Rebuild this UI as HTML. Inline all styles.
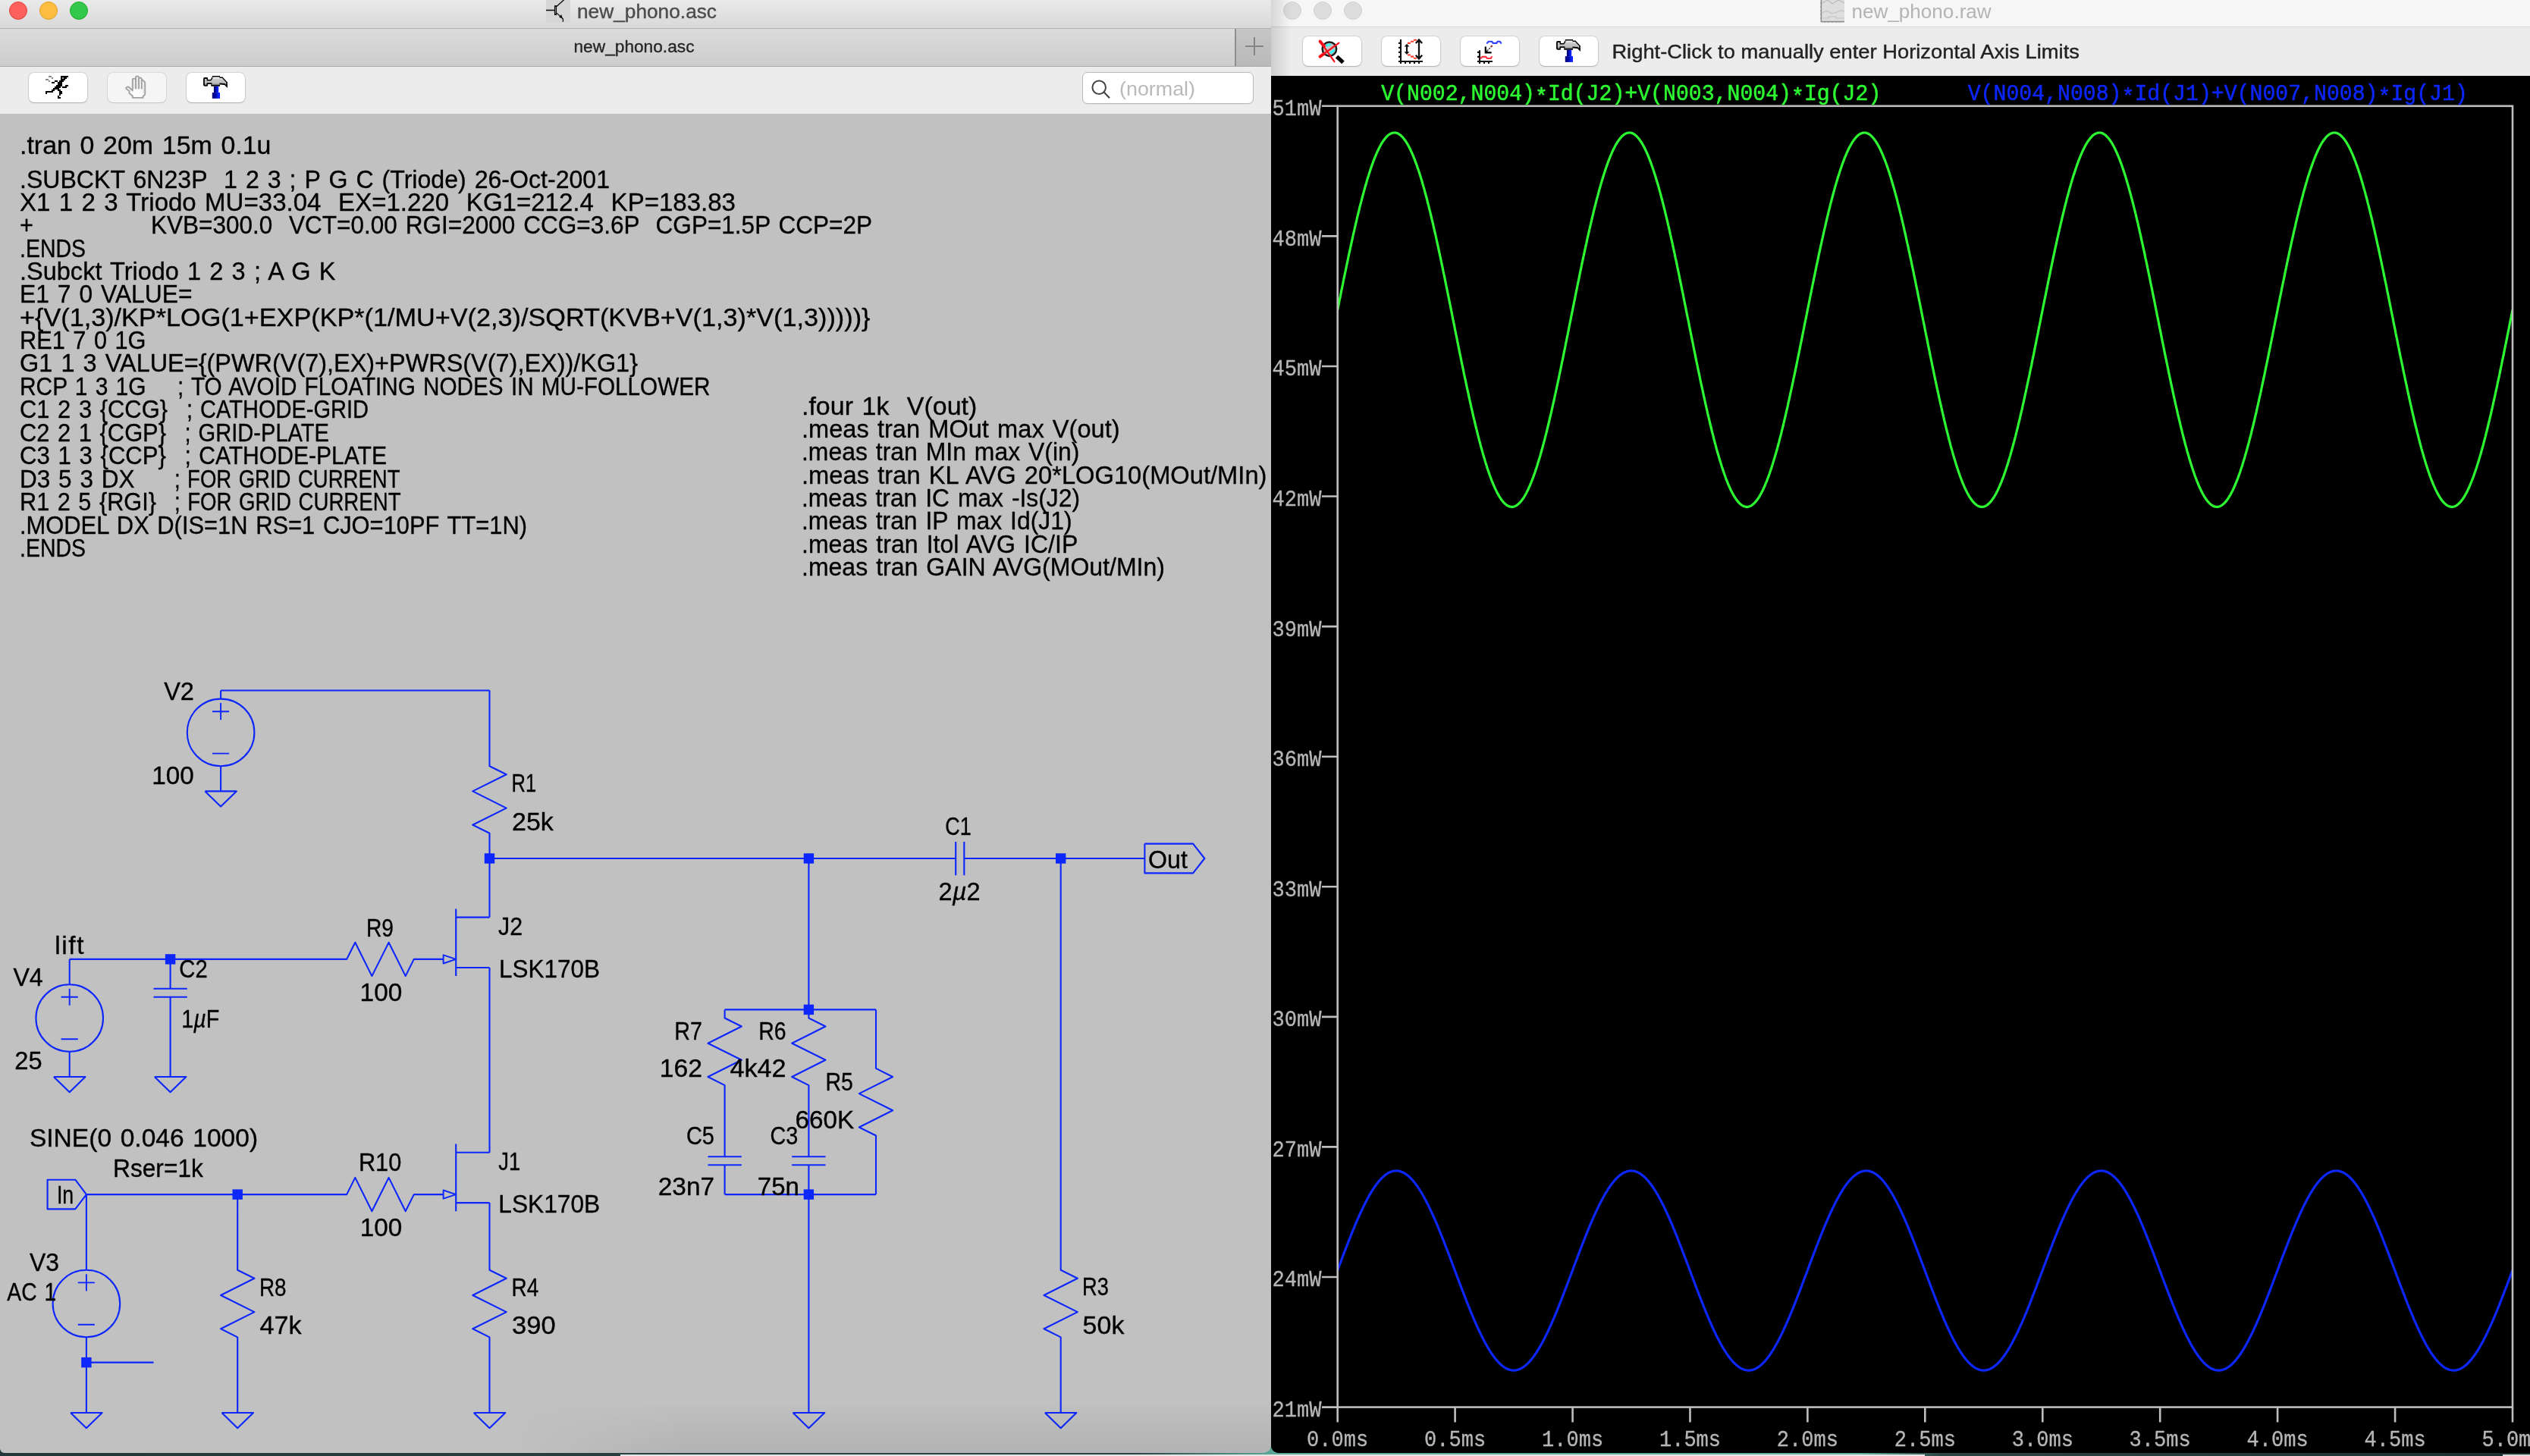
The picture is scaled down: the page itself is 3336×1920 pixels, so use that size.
<!DOCTYPE html>
<html><head><meta charset="utf-8"><title>LTspice</title>
<style>
html,body{margin:0;padding:0}
body{width:3336px;height:1920px;position:relative;overflow:hidden;background:linear-gradient(to right,#22383a 0,#2a4446 1500px,#5ca898 1680px,#62b0a0 2450px,#2a4442 2560px,#1c2e2e 3336px);font-family:"Liberation Sans", sans-serif}
.abs{position:absolute}
svg{will-change:transform}
#deskb{position:absolute;left:818px;width:1720px;top:1918px;height:2px;background:#e6e6e6}
#deskc{position:absolute;left:3300px;right:0;top:1918px;height:2px;background:#d8d8d8}
#lw{position:absolute;left:0;top:0;width:1676px;height:1916px;border-radius:0 0 10px 6px;overflow:hidden;background:#c1c1c1}
#rw{position:absolute;left:1676px;top:0;width:1660px;height:1916px;border-radius:0 0 0 10px;overflow:hidden;background:#000}
#ltitle{position:absolute;left:0;top:0;width:100%;height:37px;background:linear-gradient(#eaeaea,#d8d8d8);border-bottom:1px solid #b4b4b4}
#ltab{position:absolute;left:0;top:38px;width:100%;height:49px;background:linear-gradient(#dcdcdc,#cdcdcd);border-bottom:1px solid #a8a8a8}
#lplus{position:absolute;left:1628px;top:0;width:48px;height:49px;background:linear-gradient(#c6c6c6,#b9b9b9);border-left:2px solid #8f8f8f;box-sizing:border-box}
#ltool{position:absolute;left:0;top:88px;width:100%;height:62px;background:#ececec}
.tl{position:absolute;top:2px;width:24px;height:24px;border-radius:50%;box-sizing:border-box}
.btn{position:absolute;height:39px;width:77px;background:#fff;border-radius:7px;box-shadow:0 0 0 1px rgba(0,0,0,.10),0 1px 1.5px rgba(0,0,0,.18);overflow:hidden}
.btn.dis{background:#f5f5f5;box-shadow:0 0 0 1px rgba(0,0,0,.07),0 1px 1.5px rgba(0,0,0,.10)}
#search{position:absolute;left:1427px;top:95px;width:226px;height:42px;background:#fff;border-radius:7px;box-sizing:border-box;border:1px solid #b9b9b9;box-shadow:0 0.5px 1px rgba(0,0,0,.06)}
#rtitle{position:absolute;left:0;top:0;width:100%;height:35px;background:#f6f6f6;border-bottom:1px solid #d4d4d4}
#rtool{position:absolute;left:0;top:36px;width:100%;height:64px;background:#ececec}
#rshadow{position:absolute;left:0;top:0;width:26px;height:100px;background:linear-gradient(to right,rgba(0,0,0,.13),rgba(0,0,0,0))}
</style></head><body>
<div id="deskb"></div><div id="deskc"></div>
<div id="lw">
<svg width="1676" height="1766" viewBox="0 0 1676 1766" style="position:absolute;left:0;top:150px">
<g fill="none" stroke="#0c26fb" stroke-width="2.1" stroke-linejoin="round" stroke-linecap="butt">
<path d="M291.1 760.5 L291.1 771.6 M291.1 860.2 L291.1 871.3 M291.1 760.5 L645.5 760.5 M645.5 760.5 L645.5 849.1 M291.1 871.3 L291.1 893.4 M270.3 893.4 L311.8 893.4 L291.1 913.6 L270.3 893.4 M645.5 849.1 L645.5 860.2 L667.7 871.3 L623.3 893.4 L667.7 915.6 L623.3 937.7 L645.5 948.8 L645.5 959.9 M645.5 959.9 L645.5 1026.3 M645.5 982.0 L1221.5 982.0 M645.5 1026.3 L645.5 1059.6 M645.5 1059.6 L601.2 1059.6 M601.2 1048.5 L601.2 1137.1 M601.2 1126.0 L645.5 1126.0 M645.5 1126.0 L645.5 1159.2 M579.0 1114.9 L584.6 1114.9 M645.5 1159.2 L645.5 1336.5 M645.5 1336.5 L645.5 1369.7 M645.5 1369.7 L601.2 1369.7 M601.2 1358.6 L601.2 1447.2 M601.2 1436.1 L645.5 1436.1 M645.5 1436.1 L645.5 1469.4 M579.0 1425.1 L584.6 1425.1 M645.5 1469.4 L645.5 1513.7 M645.5 1513.7 L645.5 1524.7 L667.7 1535.8 L623.3 1558.0 L667.7 1580.1 L623.3 1602.3 L645.5 1613.4 L645.5 1624.4 M645.5 1624.4 L645.5 1713.0 M624.7 1713.0 L666.3 1713.0 L645.5 1733.2 L624.7 1713.0 M446.1 1114.9 L457.2 1114.9 L468.3 1092.8 L490.4 1137.1 L512.6 1092.8 L534.7 1137.1 L545.8 1114.9 L556.9 1114.9 M556.9 1114.9 L579.0 1114.9 M91.7 1114.9 L446.1 1114.9 M91.7 1137.1 L91.7 1148.2 M91.7 1236.8 L91.7 1247.8 M91.7 1114.9 L91.7 1137.1 M91.7 1247.8 L91.7 1270.0 M70.9 1270.0 L112.5 1270.0 L91.7 1290.2 L70.9 1270.0 M224.6 1114.9 L224.6 1153.7 M224.6 1164.8 L224.6 1203.5 M202.5 1153.7 L246.8 1153.7 M202.5 1164.8 L246.8 1164.8 M224.6 1203.5 L224.6 1270.0 M203.8 1270.0 L245.4 1270.0 L224.6 1290.2 L203.8 1270.0 M446.1 1425.1 L457.2 1425.1 L468.3 1402.9 L490.4 1447.2 L512.6 1402.9 L534.7 1447.2 L545.8 1425.1 L556.9 1425.1 M556.9 1425.1 L579.0 1425.1 M113.9 1425.1 L446.1 1425.1 M113.9 1425.1 L99.3 1405.7 L62.6 1405.7 L62.6 1444.4 L99.3 1444.4 L113.9 1425.1 M113.9 1425.1 L113.9 1513.7 M113.9 1513.7 L113.9 1524.7 M113.9 1613.4 L113.9 1624.4 M113.9 1624.4 L113.9 1713.0 M113.9 1646.6 L202.5 1646.6 M93.1 1713.0 L134.6 1713.0 L113.9 1733.2 L93.1 1713.0 M313.2 1425.1 L313.2 1513.7 M313.2 1513.7 L313.2 1524.7 L335.4 1535.8 L291.1 1558.0 L335.4 1580.1 L291.1 1602.3 L313.2 1613.4 L313.2 1624.4 M313.2 1624.4 L313.2 1713.0 M292.5 1713.0 L334.0 1713.0 L313.2 1733.2 L292.5 1713.0 M1066.4 982.0 L1066.4 1181.4 M955.6 1181.4 L1155.0 1181.4 M955.6 1181.4 L955.6 1192.5 L977.8 1203.5 L933.5 1225.7 L977.8 1247.8 L933.5 1270.0 L955.6 1281.1 L955.6 1292.1 M1066.4 1181.4 L1066.4 1192.5 L1088.5 1203.5 L1044.2 1225.7 L1088.5 1247.8 L1044.2 1270.0 L1066.4 1281.1 L1066.4 1292.1 M1155.0 1181.4 L1155.0 1247.8 M1155.0 1247.8 L1155.0 1258.9 L1177.1 1270.0 L1132.8 1292.1 L1177.1 1314.3 L1132.8 1336.5 L1155.0 1347.5 L1155.0 1358.6 M1155.0 1358.6 L1155.0 1425.1 M955.6 1292.1 L955.6 1336.5 M1066.4 1292.1 L1066.4 1336.5 M955.6 1336.5 L955.6 1375.2 M955.6 1386.3 L955.6 1425.1 M933.5 1375.2 L977.8 1375.2 M933.5 1386.3 L977.8 1386.3 M1066.4 1336.5 L1066.4 1375.2 M1066.4 1386.3 L1066.4 1425.1 M1044.2 1375.2 L1088.5 1375.2 M1044.2 1386.3 L1088.5 1386.3 M955.6 1425.1 L1155.0 1425.1 M1066.4 1425.1 L1066.4 1713.0 M1045.6 1713.0 L1087.2 1713.0 L1066.4 1733.2 L1045.6 1713.0 M1221.5 982.0 L1260.2 982.0 M1271.3 982.0 L1310.1 982.0 M1260.2 959.9 L1260.2 1004.2 M1271.3 959.9 L1271.3 1004.2 M1310.1 982.0 L1509.4 982.0 M1509.4 962.6 L1509.4 1001.4 L1573.1 1001.4 L1588.3 982.0 L1573.1 962.6 L1509.4 962.6 M1398.7 982.0 L1398.7 1513.7 M1398.7 1513.7 L1398.7 1524.7 L1420.8 1535.8 L1376.5 1558.0 L1420.8 1580.1 L1376.5 1602.3 L1398.7 1613.4 L1398.7 1624.4 M1398.7 1624.4 L1398.7 1713.0 M1377.9 1713.0 L1419.4 1713.0 L1398.7 1733.2 L1377.9 1713.0"/>
<circle cx="291.1" cy="815.9" r="44.3"/>
<circle cx="91.7" cy="1192.5" r="44.3"/>
<circle cx="113.9" cy="1569.0" r="44.3"/>
<path stroke-width="1.9" d="M280.0 788.2 L302.1 788.2 M291.1 777.1 L291.1 799.3 M280.0 843.6 L302.1 843.6 M584.6 1109.4 L601.2 1114.9 L584.6 1120.5 Z M584.6 1419.5 L601.2 1425.1 L584.6 1430.6 Z M80.6 1164.8 L102.8 1164.8 M91.7 1153.7 L91.7 1175.8 M80.6 1220.2 L102.8 1220.2 M102.8 1541.4 L124.9 1541.4 M113.9 1530.3 L113.9 1552.4 M102.8 1596.7 L124.9 1596.7"/>
</g>
<g fill="#0c26fb">
<rect x="638.8" y="975.3" width="13.4" height="13.4"/>
<rect x="217.9" y="1108.2" width="13.4" height="13.4"/>
<rect x="306.5" y="1418.4" width="13.4" height="13.4"/>
<rect x="107.2" y="1639.9" width="13.4" height="13.4"/>
<rect x="1059.7" y="975.3" width="13.4" height="13.4"/>
<rect x="1059.7" y="1174.7" width="13.4" height="13.4"/>
<rect x="1059.7" y="1418.4" width="13.4" height="13.4"/>
<rect x="1392.0" y="975.3" width="13.4" height="13.4"/>
</g>
<g font-family='"Liberation Sans", sans-serif' font-size="33.4" fill="#000" stroke="#000" stroke-width="0.35" word-spacing="2.2">
<text x="26.0" y="52.5" textLength="331.5" lengthAdjust="spacingAndGlyphs">.tran 0 20m 15m 0.1u</text>
<text x="26.0" y="97.5" textLength="778.0" lengthAdjust="spacingAndGlyphs">.SUBCKT 6N23P  1 2 3 ; P G C (Triode) 26-Oct-2001</text>
<text x="26.0" y="127.8" textLength="944.0" lengthAdjust="spacingAndGlyphs">X1 1 2 3 Triodo MU=33.04  EX=1.220  KG1=212.4  KP=183.83</text>
<text x="26.0" y="158.2" textLength="18.0" lengthAdjust="spacingAndGlyphs">+</text>
<text x="199.0" y="158.2" textLength="951.0" lengthAdjust="spacingAndGlyphs">KVB=300.0  VCT=0.00 RGI=2000 CCG=3.6P  CGP=1.5P CCP=2P</text>
<text x="26.0" y="188.5" textLength="87.0" lengthAdjust="spacingAndGlyphs">.ENDS</text>
<text x="26.0" y="218.8" textLength="416.5" lengthAdjust="spacingAndGlyphs">.Subckt Triodo 1 2 3 ; A G K</text>
<text x="26.0" y="249.0" textLength="227.5" lengthAdjust="spacingAndGlyphs">E1 7 0 VALUE=</text>
<text x="26.0" y="279.5" textLength="1121.5" lengthAdjust="spacingAndGlyphs">+{V(1,3)/KP*LOG(1+EXP(KP*(1/MU+V(2,3)/SQRT(KVB+V(1,3)*V(1,3)))))}</text>
<text x="26.0" y="309.8" textLength="166.5" lengthAdjust="spacingAndGlyphs">RE1 7 0 1G</text>
<text x="26.0" y="340.0" textLength="815.0" lengthAdjust="spacingAndGlyphs">G1 1 3 VALUE={(PWR(V(7),EX)+PWRS(V(7),EX))/KG1}</text>
<text x="26.0" y="370.5" textLength="166.5" lengthAdjust="spacingAndGlyphs">RCP 1 3 1G</text>
<text x="234.0" y="370.5" textLength="702.5" lengthAdjust="spacingAndGlyphs">; TO AVOID FLOATING NODES IN MU-FOLLOWER</text>
<text x="26.0" y="401.0" textLength="195.0" lengthAdjust="spacingAndGlyphs">C1 2 3 {CCG}</text>
<text x="246.0" y="401.0" textLength="240.0" lengthAdjust="spacingAndGlyphs">; CATHODE-GRID</text>
<text x="26.0" y="431.5" textLength="193.0" lengthAdjust="spacingAndGlyphs">C2 2 1 {CGP}</text>
<text x="243.5" y="431.5" textLength="190.5" lengthAdjust="spacingAndGlyphs">; GRID-PLATE</text>
<text x="26.0" y="462.0" textLength="193.0" lengthAdjust="spacingAndGlyphs">C3 1 3 {CCP}</text>
<text x="243.5" y="462.0" textLength="266.5" lengthAdjust="spacingAndGlyphs">; CATHODE-PLATE</text>
<text x="26.0" y="492.5" textLength="151.5" lengthAdjust="spacingAndGlyphs">D3 5 3 DX</text>
<text x="230.0" y="492.5" textLength="297.5" lengthAdjust="spacingAndGlyphs">; FOR GRID CURRENT</text>
<text x="26.0" y="523.0" textLength="180.0" lengthAdjust="spacingAndGlyphs">R1 2 5 {RGI}</text>
<text x="230.0" y="523.0" textLength="298.5" lengthAdjust="spacingAndGlyphs">; FOR GRID CURRENT</text>
<text x="26.0" y="553.5" textLength="669.0" lengthAdjust="spacingAndGlyphs">.MODEL DX D(IS=1N RS=1 CJO=10PF TT=1N)</text>
<text x="26.0" y="584.0" textLength="87.0" lengthAdjust="spacingAndGlyphs">.ENDS</text>
<text x="1057.0" y="396.5" textLength="231.3" lengthAdjust="spacingAndGlyphs">.four 1k  V(out)</text>
<text x="1057.0" y="427.0" textLength="419.6" lengthAdjust="spacingAndGlyphs">.meas tran MOut max V(out)</text>
<text x="1057.0" y="457.3" textLength="366.4" lengthAdjust="spacingAndGlyphs">.meas tran MIn max V(in)</text>
<text x="1057.0" y="487.6" textLength="613.5" lengthAdjust="spacingAndGlyphs">.meas tran KL AVG 20*LOG10(MOut/MIn)</text>
<text x="1057.0" y="518.0" textLength="367.0" lengthAdjust="spacingAndGlyphs">.meas tran IC max -Is(J2)</text>
<text x="1057.0" y="548.3" textLength="356.5" lengthAdjust="spacingAndGlyphs">.meas tran IP max Id(J1)</text>
<text x="1057.0" y="578.6" textLength="364.3" lengthAdjust="spacingAndGlyphs">.meas tran Itol AVG IC/IP</text>
<text x="1057.0" y="609.0" textLength="479.0" lengthAdjust="spacingAndGlyphs">.meas tran GAIN AVG(MOut/MIn)</text>
<text x="216.2" y="773.0" textLength="39.7" lengthAdjust="spacingAndGlyphs">V2</text>
<text x="200.3" y="883.6" textLength="55.6" lengthAdjust="spacingAndGlyphs">100</text>
<text x="674.6" y="894.4" textLength="32.6" lengthAdjust="spacingAndGlyphs">R1</text>
<text x="675.0" y="944.6" textLength="54.8" lengthAdjust="spacingAndGlyphs">25k</text>
<text x="482.9" y="1084.6" textLength="36.0" lengthAdjust="spacingAndGlyphs">R9</text>
<text x="474.6" y="1170.0" textLength="55.7" lengthAdjust="spacingAndGlyphs">100</text>
<text x="72.3" y="1107.6" textLength="38.2" lengthAdjust="spacing">lift</text>
<text x="17.4" y="1149.5" textLength="39.4" lengthAdjust="spacingAndGlyphs">V4</text>
<text x="236.3" y="1139.2" textLength="37.4" lengthAdjust="spacingAndGlyphs">C2</text>
<text x="657.0" y="1083.2" textLength="32.0" lengthAdjust="spacingAndGlyphs">J2</text>
<text x="658.0" y="1138.8" textLength="133.0" lengthAdjust="spacingAndGlyphs">LSK170B</text>
<text x="19.3" y="1259.7" textLength="36.3" lengthAdjust="spacingAndGlyphs">25</text>
<text x="38.9" y="1362.4" textLength="301.2" lengthAdjust="spacingAndGlyphs">SINE(0 0.046 1000)</text>
<text x="149.1" y="1401.7" textLength="118.7" lengthAdjust="spacingAndGlyphs">Rser=1k</text>
<text x="74.9" y="1437.0" textLength="22.3" lengthAdjust="spacingAndGlyphs">In</text>
<text x="472.9" y="1394.0" textLength="56.4" lengthAdjust="spacingAndGlyphs">R10</text>
<text x="474.8" y="1479.6" textLength="55.6" lengthAdjust="spacingAndGlyphs">100</text>
<text x="657.3" y="1392.5" textLength="28.9" lengthAdjust="spacingAndGlyphs">J1</text>
<text x="657.3" y="1448.8" textLength="133.9" lengthAdjust="spacingAndGlyphs">LSK170B</text>
<text x="38.9" y="1525.6" textLength="39.0" lengthAdjust="spacingAndGlyphs">V3</text>
<text x="9.3" y="1564.6" textLength="64.9" lengthAdjust="spacingAndGlyphs">AC 1</text>
<text x="342.0" y="1558.6" textLength="35.6" lengthAdjust="spacingAndGlyphs">R8</text>
<text x="342.4" y="1608.6" textLength="55.2" lengthAdjust="spacingAndGlyphs">47k</text>
<text x="674.6" y="1558.6" textLength="35.7" lengthAdjust="spacingAndGlyphs">R4</text>
<text x="675.1" y="1608.6" textLength="57.5" lengthAdjust="spacingAndGlyphs">390</text>
<text x="1246.2" y="951.2" textLength="34.5" lengthAdjust="spacingAndGlyphs">C1</text>
<text x="1514.0" y="994.6" textLength="51.9" lengthAdjust="spacingAndGlyphs">Out</text>
<text x="889.3" y="1220.9" textLength="36.7" lengthAdjust="spacingAndGlyphs">R7</text>
<text x="869.7" y="1270.2" textLength="56.3" lengthAdjust="spacingAndGlyphs">162</text>
<text x="1000.2" y="1220.9" textLength="36.4" lengthAdjust="spacingAndGlyphs">R6</text>
<text x="962.4" y="1270.2" textLength="74.2" lengthAdjust="spacingAndGlyphs">4k42</text>
<text x="1088.5" y="1287.6" textLength="36.4" lengthAdjust="spacingAndGlyphs">R5</text>
<text x="1048.5" y="1337.7" textLength="77.8" lengthAdjust="spacingAndGlyphs">660K</text>
<text x="904.9" y="1359.2" textLength="37.1" lengthAdjust="spacingAndGlyphs">C5</text>
<text x="1015.4" y="1359.2" textLength="36.8" lengthAdjust="spacingAndGlyphs">C3</text>
<text x="867.8" y="1426.0" textLength="74.2" lengthAdjust="spacingAndGlyphs">23n7</text>
<text x="998.8" y="1426.0" textLength="55.2" lengthAdjust="spacingAndGlyphs">75n</text>
<text x="1427.0" y="1558.4" textLength="34.8" lengthAdjust="spacingAndGlyphs">R3</text>
<text x="1427.6" y="1608.5" textLength="54.8" lengthAdjust="spacingAndGlyphs">50k</text>
<text x="239.2" y="1205.2" textLength="50.1" lengthAdjust="spacingAndGlyphs">1<tspan font-style="italic">µ</tspan>F</text>
<text x="1237.6" y="1036.5" textLength="54.9" lengthAdjust="spacingAndGlyphs">2<tspan font-style="italic">µ</tspan>2</text>
</g></svg>
<div class="abs" style="left:0;top:1850px;width:1676px;height:66px;background:linear-gradient(rgba(0,0,0,0),rgba(0,0,0,.07));-webkit-mask-image:linear-gradient(to right,transparent 680px,#000 900px);mask-image:linear-gradient(to right,transparent 680px,#000 900px)"></div>
<div id="ltitle">
<div class="tl" style="left:12px;background:#fc615d;border:1px solid #e0443e"></div>
<div class="tl" style="left:52px;background:#fdbd41;border:1px solid #dfa023"></div>
<div class="tl" style="left:92px;background:#34c84a;border:1px solid #1dad2b"></div>
<svg width="32" height="30" viewBox="0 0 32 30" style="position:absolute;left:720px;top:0;background:#d6d6d6"><path d="M0 13.5 H11 M23.6 -0.3 L14 8.6 M14 17.1 L22.4 25 V28.8" stroke="#0a0a0a" stroke-width="1.3" fill="none"/><rect x="11.5" y="7.7" width="2" height="11.8" fill="#8c8c8c" stroke="#0a0a0a" stroke-width="1.1"/><path d="M21.8 24.6 L17.2 22.7 L20.2 19 Z" fill="#0a0a0a"/></svg>
<svg class="abs" style="left:755px;top:0" width="200" height="37"><text x="6" y="23.8" font-family='"Liberation Sans", sans-serif' font-size="26" fill="#4c4c4c" stroke="#4c4c4c" stroke-width="0.4" textLength="184" lengthAdjust="spacingAndGlyphs">new_phono.asc</text></svg>
</div>
<div id="ltab">
<svg class="abs" style="left:750px;top:0" width="180" height="49"><text x="6.5" y="31.3" font-family='"Liberation Sans", sans-serif' font-size="22" fill="#262626" stroke="#262626" stroke-width="0.35" textLength="159" lengthAdjust="spacingAndGlyphs">new_phono.asc</text></svg>
<div id="lplus"><svg width="46" height="49"><path d="M12 23 H36 M24 11 V35" stroke="#858585" stroke-width="2"/></svg></div>
</div>
<div id="ltool"></div>
<div class="btn" style="left:37.5px;top:95.5px"><svg width="48" height="38" viewBox="0 0 48 38" style="position:absolute;left:14.5px;top:0.5px;filter:blur(0.45px)"><g fill="#000"><rect x="28.0" y="4.0" width="2.05" height="2.05"/><rect x="30.0" y="4.0" width="2.05" height="2.05"/><rect x="32.0" y="4.0" width="2.05" height="2.05"/><rect x="34.0" y="4.0" width="2.05" height="2.05"/><rect x="36.0" y="4.0" width="2.05" height="2.05"/><rect x="28.0" y="6.0" width="2.05" height="2.05"/><rect x="32.0" y="6.0" width="2.05" height="2.05"/><rect x="34.0" y="6.0" width="2.05" height="2.05"/><rect x="28.0" y="8.0" width="2.05" height="2.05"/><rect x="30.0" y="8.0" width="2.05" height="2.05"/><rect x="32.0" y="8.0" width="2.05" height="2.05"/><rect x="20.0" y="10.0" width="2.05" height="2.05"/><rect x="22.0" y="10.0" width="2.05" height="2.05"/><rect x="26.0" y="10.0" width="2.05" height="2.05"/><rect x="28.0" y="10.0" width="2.05" height="2.05"/><rect x="30.0" y="10.0" width="2.05" height="2.05"/><rect x="16.0" y="12.0" width="2.05" height="2.05"/><rect x="18.0" y="12.0" width="2.05" height="2.05"/><rect x="24.0" y="12.0" width="2.05" height="2.05"/><rect x="26.0" y="12.0" width="2.05" height="2.05"/><rect x="28.0" y="12.0" width="2.05" height="2.05"/><rect x="24.0" y="14.0" width="2.05" height="2.05"/><rect x="26.0" y="14.0" width="2.05" height="2.05"/><rect x="28.0" y="14.0" width="2.05" height="2.05"/><rect x="22.0" y="16.0" width="2.05" height="2.05"/><rect x="24.0" y="16.0" width="2.05" height="2.05"/><rect x="26.0" y="16.0" width="2.05" height="2.05"/><rect x="28.0" y="16.0" width="2.05" height="2.05"/><rect x="34.0" y="16.0" width="2.05" height="2.05"/><rect x="36.0" y="16.0" width="2.05" height="2.05"/><rect x="20.0" y="18.0" width="2.05" height="2.05"/><rect x="22.0" y="18.0" width="2.05" height="2.05"/><rect x="24.0" y="18.0" width="2.05" height="2.05"/><rect x="26.0" y="18.0" width="2.05" height="2.05"/><rect x="30.0" y="18.0" width="2.05" height="2.05"/><rect x="32.0" y="18.0" width="2.05" height="2.05"/><rect x="34.0" y="18.0" width="2.05" height="2.05"/><rect x="18.0" y="20.0" width="2.05" height="2.05"/><rect x="20.0" y="20.0" width="2.05" height="2.05"/><rect x="22.0" y="20.0" width="2.05" height="2.05"/><rect x="24.0" y="20.0" width="2.05" height="2.05"/><rect x="16.0" y="22.0" width="2.05" height="2.05"/><rect x="18.0" y="22.0" width="2.05" height="2.05"/><rect x="24.0" y="22.0" width="2.05" height="2.05"/><rect x="26.0" y="22.0" width="2.05" height="2.05"/><rect x="8.0" y="24.0" width="2.05" height="2.05"/><rect x="10.0" y="24.0" width="2.05" height="2.05"/><rect x="12.0" y="24.0" width="2.05" height="2.05"/><rect x="14.0" y="24.0" width="2.05" height="2.05"/><rect x="16.0" y="24.0" width="2.05" height="2.05"/><rect x="26.0" y="24.0" width="2.05" height="2.05"/><rect x="28.0" y="24.0" width="2.05" height="2.05"/><rect x="8.0" y="26.0" width="2.05" height="2.05"/><rect x="26.0" y="26.0" width="2.05" height="2.05"/><rect x="28.0" y="26.0" width="2.05" height="2.05"/><rect x="26.0" y="28.0" width="2.05" height="2.05"/><rect x="24.0" y="30.0" width="2.05" height="2.05"/><rect x="24.0" y="32.0" width="2.05" height="2.05"/><rect x="26.0" y="32.0" width="2.05" height="2.05"/></g><g fill="#8a8a8a"><rect x="12.0" y="4.0" width="2.05" height="2.05"/><rect x="14.0" y="4.0" width="2.05" height="2.05"/><rect x="16.0" y="6.0" width="2.05" height="2.05"/><rect x="8.0" y="8.0" width="2.05" height="2.05"/><rect x="10.0" y="8.0" width="2.05" height="2.05"/><rect x="12.0" y="10.0" width="2.05" height="2.05"/><rect x="30" y="6" width="2" height="2" fill="#9a9a9a"/></g></svg></div>
<div class="btn dis" style="left:141.5px;top:95.5px"><svg width="48" height="38" viewBox="0 0 48 38" style="position:absolute;left:14.5px;top:0.5px;filter:blur(0.45px)"><path d="M18.8 23.5 V9 Q18.8 7.6 20.5 7.6 Q22 7.6 23 9 V6 Q23 4.4 25 4.4 Q26.9 4.4 26.9 6.5 V8 Q27.5 6.5 29 6.5 Q30.8 6.8 30.8 8.5 L35.2 12.5 V28.7 L32.6 31 V32.9 H18.8 V30.5 L14.5 27 V24 L10.5 21 Q9.8 19.6 11.4 18.8 Q13 18 14 19 Z" fill="#fbfbfb" stroke="#a2a2a2" stroke-width="1.9" stroke-linejoin="round"/>
<path d="M23 9 V21.5 M26.9 8 V21.5 M30.8 9 V21.5" stroke="#a2a2a2" stroke-width="1.9" fill="none"/><path d="M20.9 9.5 V21 M24.9 7 V21 M28.8 9 V21 M33 13 V27" stroke="#e6e6e6" stroke-width="1.6"/></svg></div>
<div class="btn" style="left:245.5px;top:95.5px"><svg width="48" height="38" viewBox="0 0 48 38" style="position:absolute;left:14.5px;top:0.5px;filter:blur(0.45px)"><defs><linearGradient id="hb" x1="0" x2="1"><stop offset="0" stop-color="#00007c"/><stop offset=".45" stop-color="#0008a0"/><stop offset=".8" stop-color="#0a22ff"/><stop offset="1" stop-color="#0a22ff"/></linearGradient>
<linearGradient id="hg" x1="0" x2="0" y1="0" y2="1"><stop offset="0" stop-color="#ffffff"/><stop offset=".3" stop-color="#c8c8c8"/><stop offset=".75" stop-color="#bcbcbc"/><stop offset="1" stop-color="#6a6a6a"/></linearGradient></defs>
<path d="M8.1 8 Q8.1 6 10 6 H13 Q14.1 6 14.1 7.5 V8.9 H17.5 L19.8 5.5 V3.9 H30 V5.5 H33.5 L39.9 12.5 V20.1 L36 16 L30 15.5 V17.8 H18.3 V15 H14.1 V16.5 Q14.1 17.8 12.5 17.8 H10 Q8.1 17.8 8.1 16 Z" fill="#000"/>
<path d="M9.9 8 H12.6 V10.4 H18.2 L20.4 7.2 V5.6 H29.5 V7 H33 L38.3 12.8 V16 L36.2 14 L29.6 13.5 V16 H19.4 V13.3 H12.6 V16.3 H9.9 Z" fill="url(#hg)"/>
<rect x="21.9" y="17.8" width="6.3" height="8.4" fill="url(#hb)"/><rect x="19.8" y="26.1" width="10.2" height="7.8" fill="url(#hb)"/></svg></div>
<div id="search">
<svg class="abs" style="left:0;top:0" width="224" height="39"><circle cx="21.2" cy="19.2" r="8.8" fill="none" stroke="#444" stroke-width="2"/><path d="M27.6 25.6 L35 33.2" stroke="#444" stroke-width="2.2" stroke-linecap="butt"/><text x="48" y="29.5" font-family='"Liberation Sans", sans-serif' font-size="26" fill="#b9b9b9" textLength="100" lengthAdjust="spacingAndGlyphs">(normal)</text></svg>
</div>
</div>
<div id="rw">
<svg width="1660" height="1816" viewBox="1676 100 1660 1816" style="position:absolute;left:0;top:100px">
<rect x="1676" y="100" width="1660" height="1816" fill="#000"/>
<clipPath id="pc"><rect x="1763.7" y="139.8" width="1549.3" height="1715.8"/></clipPath>
<polyline clip-path="url(#pc)" fill="none" stroke="#2dfb32" stroke-width="3.2" stroke-linejoin="round" points="1763.7,408.7 1764.7,403.8 1765.6,399.0 1766.6,394.2 1767.6,389.4 1768.5,384.6 1769.5,379.8 1770.5,375.0 1771.4,370.3 1772.4,365.6 1773.4,360.9 1774.4,356.2 1775.3,351.5 1776.3,346.9 1777.3,342.3 1778.2,337.7 1779.2,333.2 1780.2,328.7 1781.1,324.2 1782.1,319.8 1783.1,315.4 1784.0,311.0 1785.0,306.7 1786.0,302.5 1786.9,298.3 1787.9,294.1 1788.9,290.0 1789.8,285.9 1790.8,281.9 1791.8,277.9 1792.7,274.0 1793.7,270.2 1794.7,266.4 1795.7,262.6 1796.6,259.0 1797.6,255.3 1798.6,251.8 1799.5,248.3 1800.5,244.9 1801.5,241.6 1802.4,238.3 1803.4,235.1 1804.4,232.0 1805.3,228.9 1806.3,225.9 1807.3,223.0 1808.2,220.2 1809.2,217.4 1810.2,214.7 1811.1,212.1 1812.1,209.6 1813.1,207.2 1814.1,204.8 1815.0,202.6 1816.0,200.4 1817.0,198.3 1817.9,196.3 1818.9,194.4 1819.9,192.5 1820.8,190.8 1821.8,189.1 1822.8,187.5 1823.7,186.1 1824.7,184.7 1825.7,183.4 1826.6,182.2 1827.6,181.1 1828.6,180.0 1829.5,179.1 1830.5,178.3 1831.5,177.5 1832.5,176.9 1833.4,176.3 1834.4,175.9 1835.4,175.5 1836.3,175.3 1837.3,175.1 1838.3,175.0 1839.2,175.0 1840.2,175.1 1841.2,175.3 1842.1,175.6 1843.1,176.0 1844.1,176.5 1845.0,177.1 1846.0,177.8 1847.0,178.6 1847.9,179.5 1848.9,180.4 1849.9,181.5 1850.8,182.6 1851.8,183.9 1852.8,185.2 1853.8,186.6 1854.7,188.1 1855.7,189.7 1856.7,191.4 1857.6,193.2 1858.6,195.1 1859.6,197.0 1860.5,199.1 1861.5,201.2 1862.5,203.4 1863.4,205.7 1864.4,208.1 1865.4,210.6 1866.3,213.1 1867.3,215.7 1868.3,218.4 1869.2,221.2 1870.2,224.1 1871.2,227.0 1872.2,230.0 1873.1,233.1 1874.1,236.3 1875.1,239.5 1876.0,242.8 1877.0,246.2 1878.0,249.6 1878.9,253.1 1879.9,256.7 1880.9,260.3 1881.8,264.0 1882.8,267.8 1883.8,271.6 1884.7,275.5 1885.7,279.4 1886.7,283.4 1887.6,287.4 1888.6,291.5 1889.6,295.7 1890.5,299.8 1891.5,304.1 1892.5,308.4 1893.5,312.7 1894.4,317.1 1895.4,321.5 1896.4,325.9 1897.3,330.4 1898.3,334.9 1899.3,339.5 1900.2,344.0 1901.2,348.6 1902.2,353.3 1903.1,358.0 1904.1,362.6 1905.1,367.4 1906.0,372.1 1907.0,376.8 1908.0,381.6 1908.9,386.4 1909.9,391.2 1910.9,396.0 1911.9,400.8 1912.8,405.7 1913.8,410.5 1914.8,415.4 1915.7,420.2 1916.7,425.0 1917.7,429.9 1918.6,434.7 1919.6,439.6 1920.6,444.4 1921.5,449.2 1922.5,454.0 1923.5,458.8 1924.4,463.6 1925.4,468.4 1926.4,473.1 1927.3,477.8 1928.3,482.5 1929.3,487.2 1930.2,491.9 1931.2,496.5 1932.2,501.1 1933.2,505.7 1934.1,510.2 1935.1,514.7 1936.1,519.2 1937.0,523.6 1938.0,528.0 1939.0,532.4 1939.9,536.7 1940.9,540.9 1941.9,545.1 1942.8,549.3 1943.8,553.4 1944.8,557.5 1945.7,561.5 1946.7,565.5 1947.7,569.4 1948.6,573.2 1949.6,577.0 1950.6,580.8 1951.6,584.4 1952.5,588.1 1953.5,591.6 1954.5,595.1 1955.4,598.5 1956.4,601.8 1957.4,605.1 1958.3,608.3 1959.3,611.4 1960.3,614.5 1961.2,617.5 1962.2,620.4 1963.2,623.2 1964.1,626.0 1965.1,628.7 1966.1,631.3 1967.0,633.8 1968.0,636.2 1969.0,638.6 1970.0,640.8 1970.9,643.0 1971.9,645.1 1972.9,647.1 1973.8,649.0 1974.8,650.9 1975.8,652.6 1976.7,654.3 1977.7,655.9 1978.7,657.3 1979.6,658.7 1980.6,660.0 1981.6,661.2 1982.5,662.3 1983.5,663.4 1984.5,664.3 1985.4,665.1 1986.4,665.9 1987.4,666.5 1988.3,667.1 1989.3,667.5 1990.3,667.9 1991.3,668.1 1992.2,668.3 1993.2,668.4 1994.2,668.4 1995.1,668.3 1996.1,668.1 1997.1,667.8 1998.0,667.4 1999.0,666.9 2000.0,666.3 2000.9,665.6 2001.9,664.8 2002.9,663.9 2003.8,663.0 2004.8,661.9 2005.8,660.8 2006.7,659.5 2007.7,658.2 2008.7,656.8 2009.7,655.3 2010.6,653.7 2011.6,652.0 2012.6,650.2 2013.5,648.3 2014.5,646.4 2015.5,644.3 2016.4,642.2 2017.4,640.0 2018.4,637.7 2019.3,635.3 2020.3,632.8 2021.3,630.3 2022.2,627.7 2023.2,625.0 2024.2,622.2 2025.1,619.3 2026.1,616.4 2027.1,613.4 2028.0,610.3 2029.0,607.1 2030.0,603.9 2031.0,600.6 2031.9,597.2 2032.9,593.8 2033.9,590.3 2034.8,586.7 2035.8,583.1 2036.8,579.4 2037.7,575.6 2038.7,571.8 2039.7,567.9 2040.6,564.0 2041.6,560.0 2042.6,556.0 2043.5,551.9 2044.5,547.7 2045.5,543.6 2046.4,539.3 2047.4,535.0 2048.4,530.7 2049.4,526.3 2050.3,521.9 2051.3,517.5 2052.3,513.0 2053.2,508.5 2054.2,503.9 2055.2,499.4 2056.1,494.8 2057.1,490.1 2058.1,485.4 2059.0,480.8 2060.0,476.0 2061.0,471.3 2061.9,466.6 2062.9,461.8 2063.9,457.0 2064.8,452.2 2065.8,447.4 2066.8,442.6 2067.8,437.7 2068.7,432.9 2069.7,428.0 2070.7,423.2 2071.6,418.4 2072.6,413.5 2073.6,408.7 2074.5,403.8 2075.5,399.0 2076.5,394.2 2077.4,389.4 2078.4,384.6 2079.4,379.8 2080.3,375.0 2081.3,370.3 2082.3,365.6 2083.2,360.9 2084.2,356.2 2085.2,351.5 2086.1,346.9 2087.1,342.3 2088.1,337.7 2089.1,333.2 2090.0,328.7 2091.0,324.2 2092.0,319.8 2092.9,315.4 2093.9,311.0 2094.9,306.7 2095.8,302.5 2096.8,298.3 2097.8,294.1 2098.7,290.0 2099.7,285.9 2100.7,281.9 2101.6,277.9 2102.6,274.0 2103.6,270.2 2104.5,266.4 2105.5,262.6 2106.5,259.0 2107.5,255.3 2108.4,251.8 2109.4,248.3 2110.4,244.9 2111.3,241.6 2112.3,238.3 2113.3,235.1 2114.2,232.0 2115.2,228.9 2116.2,225.9 2117.1,223.0 2118.1,220.2 2119.1,217.4 2120.0,214.7 2121.0,212.1 2122.0,209.6 2122.9,207.2 2123.9,204.8 2124.9,202.6 2125.8,200.4 2126.8,198.3 2127.8,196.3 2128.8,194.4 2129.7,192.5 2130.7,190.8 2131.7,189.1 2132.6,187.5 2133.6,186.1 2134.6,184.7 2135.5,183.4 2136.5,182.2 2137.5,181.1 2138.4,180.0 2139.4,179.1 2140.4,178.3 2141.3,177.5 2142.3,176.9 2143.3,176.3 2144.2,175.9 2145.2,175.5 2146.2,175.3 2147.2,175.1 2148.1,175.0 2149.1,175.0 2150.1,175.1 2151.0,175.3 2152.0,175.6 2153.0,176.0 2153.9,176.5 2154.9,177.1 2155.9,177.8 2156.8,178.6 2157.8,179.5 2158.8,180.4 2159.7,181.5 2160.7,182.6 2161.7,183.9 2162.6,185.2 2163.6,186.6 2164.6,188.1 2165.5,189.7 2166.5,191.4 2167.5,193.2 2168.5,195.1 2169.4,197.0 2170.4,199.1 2171.4,201.2 2172.3,203.4 2173.3,205.7 2174.3,208.1 2175.2,210.6 2176.2,213.1 2177.2,215.7 2178.1,218.4 2179.1,221.2 2180.1,224.1 2181.0,227.0 2182.0,230.0 2183.0,233.1 2183.9,236.3 2184.9,239.5 2185.9,242.8 2186.9,246.2 2187.8,249.6 2188.8,253.1 2189.8,256.7 2190.7,260.3 2191.7,264.0 2192.7,267.8 2193.6,271.6 2194.6,275.5 2195.6,279.4 2196.5,283.4 2197.5,287.4 2198.5,291.5 2199.4,295.7 2200.4,299.8 2201.4,304.1 2202.3,308.4 2203.3,312.7 2204.3,317.1 2205.3,321.5 2206.2,325.9 2207.2,330.4 2208.2,334.9 2209.1,339.5 2210.1,344.0 2211.1,348.6 2212.0,353.3 2213.0,358.0 2214.0,362.6 2214.9,367.4 2215.9,372.1 2216.9,376.8 2217.8,381.6 2218.8,386.4 2219.8,391.2 2220.7,396.0 2221.7,400.8 2222.7,405.7 2223.6,410.5 2224.6,415.4 2225.6,420.2 2226.6,425.0 2227.5,429.9 2228.5,434.7 2229.5,439.6 2230.4,444.4 2231.4,449.2 2232.4,454.0 2233.3,458.8 2234.3,463.6 2235.3,468.4 2236.2,473.1 2237.2,477.8 2238.2,482.5 2239.1,487.2 2240.1,491.9 2241.1,496.5 2242.0,501.1 2243.0,505.7 2244.0,510.2 2245.0,514.7 2245.9,519.2 2246.9,523.6 2247.9,528.0 2248.8,532.4 2249.8,536.7 2250.8,540.9 2251.7,545.1 2252.7,549.3 2253.7,553.4 2254.6,557.5 2255.6,561.5 2256.6,565.5 2257.5,569.4 2258.5,573.2 2259.5,577.0 2260.4,580.8 2261.4,584.4 2262.4,588.1 2263.3,591.6 2264.3,595.1 2265.3,598.5 2266.3,601.8 2267.2,605.1 2268.2,608.3 2269.2,611.4 2270.1,614.5 2271.1,617.5 2272.1,620.4 2273.0,623.2 2274.0,626.0 2275.0,628.7 2275.9,631.3 2276.9,633.8 2277.9,636.2 2278.8,638.6 2279.8,640.8 2280.8,643.0 2281.7,645.1 2282.7,647.1 2283.7,649.0 2284.7,650.9 2285.6,652.6 2286.6,654.3 2287.6,655.9 2288.5,657.3 2289.5,658.7 2290.5,660.0 2291.4,661.2 2292.4,662.3 2293.4,663.4 2294.3,664.3 2295.3,665.1 2296.3,665.9 2297.2,666.5 2298.2,667.1 2299.2,667.5 2300.1,667.9 2301.1,668.1 2302.1,668.3 2303.1,668.4 2304.0,668.4 2305.0,668.3 2306.0,668.1 2306.9,667.8 2307.9,667.4 2308.9,666.9 2309.8,666.3 2310.8,665.6 2311.8,664.8 2312.7,663.9 2313.7,663.0 2314.7,661.9 2315.6,660.8 2316.6,659.5 2317.6,658.2 2318.5,656.8 2319.5,655.3 2320.5,653.7 2321.4,652.0 2322.4,650.2 2323.4,648.3 2324.4,646.4 2325.3,644.3 2326.3,642.2 2327.3,640.0 2328.2,637.7 2329.2,635.3 2330.2,632.8 2331.1,630.3 2332.1,627.7 2333.1,625.0 2334.0,622.2 2335.0,619.3 2336.0,616.4 2336.9,613.4 2337.9,610.3 2338.9,607.1 2339.8,603.9 2340.8,600.6 2341.8,597.2 2342.8,593.8 2343.7,590.3 2344.7,586.7 2345.7,583.1 2346.6,579.4 2347.6,575.6 2348.6,571.8 2349.5,567.9 2350.5,564.0 2351.5,560.0 2352.4,556.0 2353.4,551.9 2354.4,547.7 2355.3,543.6 2356.3,539.3 2357.3,535.0 2358.2,530.7 2359.2,526.3 2360.2,521.9 2361.1,517.5 2362.1,513.0 2363.1,508.5 2364.1,503.9 2365.0,499.4 2366.0,494.8 2367.0,490.1 2367.9,485.4 2368.9,480.8 2369.9,476.0 2370.8,471.3 2371.8,466.6 2372.8,461.8 2373.7,457.0 2374.7,452.2 2375.7,447.4 2376.6,442.6 2377.6,437.7 2378.6,432.9 2379.5,428.0 2380.5,423.2 2381.5,418.4 2382.5,413.5 2383.4,408.7 2384.4,403.8 2385.4,399.0 2386.3,394.2 2387.3,389.4 2388.3,384.6 2389.2,379.8 2390.2,375.0 2391.2,370.3 2392.1,365.6 2393.1,360.9 2394.1,356.2 2395.0,351.5 2396.0,346.9 2397.0,342.3 2397.9,337.7 2398.9,333.2 2399.9,328.7 2400.8,324.2 2401.8,319.8 2402.8,315.4 2403.8,311.0 2404.7,306.7 2405.7,302.5 2406.7,298.3 2407.6,294.1 2408.6,290.0 2409.6,285.9 2410.5,281.9 2411.5,277.9 2412.5,274.0 2413.4,270.2 2414.4,266.4 2415.4,262.6 2416.3,259.0 2417.3,255.3 2418.3,251.8 2419.2,248.3 2420.2,244.9 2421.2,241.6 2422.2,238.3 2423.1,235.1 2424.1,232.0 2425.1,228.9 2426.0,225.9 2427.0,223.0 2428.0,220.2 2428.9,217.4 2429.9,214.7 2430.9,212.1 2431.8,209.6 2432.8,207.2 2433.8,204.8 2434.7,202.6 2435.7,200.4 2436.7,198.3 2437.6,196.3 2438.6,194.4 2439.6,192.5 2440.6,190.8 2441.5,189.1 2442.5,187.5 2443.5,186.1 2444.4,184.7 2445.4,183.4 2446.4,182.2 2447.3,181.1 2448.3,180.0 2449.3,179.1 2450.2,178.3 2451.2,177.5 2452.2,176.9 2453.1,176.3 2454.1,175.9 2455.1,175.5 2456.0,175.3 2457.0,175.1 2458.0,175.0 2458.9,175.0 2459.9,175.1 2460.9,175.3 2461.9,175.6 2462.8,176.0 2463.8,176.5 2464.8,177.1 2465.7,177.8 2466.7,178.6 2467.7,179.5 2468.6,180.4 2469.6,181.5 2470.6,182.6 2471.5,183.9 2472.5,185.2 2473.5,186.6 2474.4,188.1 2475.4,189.7 2476.4,191.4 2477.3,193.2 2478.3,195.1 2479.3,197.0 2480.3,199.1 2481.2,201.2 2482.2,203.4 2483.2,205.7 2484.1,208.1 2485.1,210.6 2486.1,213.1 2487.0,215.7 2488.0,218.4 2489.0,221.2 2489.9,224.1 2490.9,227.0 2491.9,230.0 2492.8,233.1 2493.8,236.3 2494.8,239.5 2495.7,242.8 2496.7,246.2 2497.7,249.6 2498.6,253.1 2499.6,256.7 2500.6,260.3 2501.6,264.0 2502.5,267.8 2503.5,271.6 2504.5,275.5 2505.4,279.4 2506.4,283.4 2507.4,287.4 2508.3,291.5 2509.3,295.7 2510.3,299.8 2511.2,304.1 2512.2,308.4 2513.2,312.7 2514.1,317.1 2515.1,321.5 2516.1,325.9 2517.0,330.4 2518.0,334.9 2519.0,339.5 2520.0,344.0 2520.9,348.6 2521.9,353.3 2522.9,358.0 2523.8,362.6 2524.8,367.4 2525.8,372.1 2526.7,376.8 2527.7,381.6 2528.7,386.4 2529.6,391.2 2530.6,396.0 2531.6,400.8 2532.5,405.7 2533.5,410.5 2534.5,415.4 2535.4,420.2 2536.4,425.0 2537.4,429.9 2538.3,434.7 2539.3,439.6 2540.3,444.4 2541.3,449.2 2542.2,454.0 2543.2,458.8 2544.2,463.6 2545.1,468.4 2546.1,473.1 2547.1,477.8 2548.0,482.5 2549.0,487.2 2550.0,491.9 2550.9,496.5 2551.9,501.1 2552.9,505.7 2553.8,510.2 2554.8,514.7 2555.8,519.2 2556.7,523.6 2557.7,528.0 2558.7,532.4 2559.7,536.7 2560.6,540.9 2561.6,545.1 2562.6,549.3 2563.5,553.4 2564.5,557.5 2565.5,561.5 2566.4,565.5 2567.4,569.4 2568.4,573.2 2569.3,577.0 2570.3,580.8 2571.3,584.4 2572.2,588.1 2573.2,591.6 2574.2,595.1 2575.1,598.5 2576.1,601.8 2577.1,605.1 2578.1,608.3 2579.0,611.4 2580.0,614.5 2581.0,617.5 2581.9,620.4 2582.9,623.2 2583.9,626.0 2584.8,628.7 2585.8,631.3 2586.8,633.8 2587.7,636.2 2588.7,638.6 2589.7,640.8 2590.6,643.0 2591.6,645.1 2592.6,647.1 2593.5,649.0 2594.5,650.9 2595.5,652.6 2596.4,654.3 2597.4,655.9 2598.4,657.3 2599.4,658.7 2600.3,660.0 2601.3,661.2 2602.3,662.3 2603.2,663.4 2604.2,664.3 2605.2,665.1 2606.1,665.9 2607.1,666.5 2608.1,667.1 2609.0,667.5 2610.0,667.9 2611.0,668.1 2611.9,668.3 2612.9,668.4 2613.9,668.4 2614.8,668.3 2615.8,668.1 2616.8,667.8 2617.8,667.4 2618.7,666.9 2619.7,666.3 2620.7,665.6 2621.6,664.8 2622.6,663.9 2623.6,663.0 2624.5,661.9 2625.5,660.8 2626.5,659.5 2627.4,658.2 2628.4,656.8 2629.4,655.3 2630.3,653.7 2631.3,652.0 2632.3,650.2 2633.2,648.3 2634.2,646.4 2635.2,644.3 2636.1,642.2 2637.1,640.0 2638.1,637.7 2639.1,635.3 2640.0,632.8 2641.0,630.3 2642.0,627.7 2642.9,625.0 2643.9,622.2 2644.9,619.3 2645.8,616.4 2646.8,613.4 2647.8,610.3 2648.7,607.1 2649.7,603.9 2650.7,600.6 2651.6,597.2 2652.6,593.8 2653.6,590.3 2654.5,586.7 2655.5,583.1 2656.5,579.4 2657.5,575.6 2658.4,571.8 2659.4,567.9 2660.4,564.0 2661.3,560.0 2662.3,556.0 2663.3,551.9 2664.2,547.7 2665.2,543.6 2666.2,539.3 2667.1,535.0 2668.1,530.7 2669.1,526.3 2670.0,521.9 2671.0,517.5 2672.0,513.0 2672.9,508.5 2673.9,503.9 2674.9,499.4 2675.9,494.8 2676.8,490.1 2677.8,485.4 2678.8,480.8 2679.7,476.0 2680.7,471.3 2681.7,466.6 2682.6,461.8 2683.6,457.0 2684.6,452.2 2685.5,447.4 2686.5,442.6 2687.5,437.7 2688.4,432.9 2689.4,428.0 2690.4,423.2 2691.3,418.4 2692.3,413.5 2693.3,408.7 2694.2,403.8 2695.2,399.0 2696.2,394.2 2697.2,389.4 2698.1,384.6 2699.1,379.8 2700.1,375.0 2701.0,370.3 2702.0,365.6 2703.0,360.9 2703.9,356.2 2704.9,351.5 2705.9,346.9 2706.8,342.3 2707.8,337.7 2708.8,333.2 2709.7,328.7 2710.7,324.2 2711.7,319.8 2712.6,315.4 2713.6,311.0 2714.6,306.7 2715.6,302.5 2716.5,298.3 2717.5,294.1 2718.5,290.0 2719.4,285.9 2720.4,281.9 2721.4,277.9 2722.3,274.0 2723.3,270.2 2724.3,266.4 2725.2,262.6 2726.2,259.0 2727.2,255.3 2728.1,251.8 2729.1,248.3 2730.1,244.9 2731.0,241.6 2732.0,238.3 2733.0,235.1 2733.9,232.0 2734.9,228.9 2735.9,225.9 2736.9,223.0 2737.8,220.2 2738.8,217.4 2739.8,214.7 2740.7,212.1 2741.7,209.6 2742.7,207.2 2743.6,204.8 2744.6,202.6 2745.6,200.4 2746.5,198.3 2747.5,196.3 2748.5,194.4 2749.4,192.5 2750.4,190.8 2751.4,189.1 2752.3,187.5 2753.3,186.1 2754.3,184.7 2755.3,183.4 2756.2,182.2 2757.2,181.1 2758.2,180.0 2759.1,179.1 2760.1,178.3 2761.1,177.5 2762.0,176.9 2763.0,176.3 2764.0,175.9 2764.9,175.5 2765.9,175.3 2766.9,175.1 2767.8,175.0 2768.8,175.0 2769.8,175.1 2770.7,175.3 2771.7,175.6 2772.7,176.0 2773.6,176.5 2774.6,177.1 2775.6,177.8 2776.6,178.6 2777.5,179.5 2778.5,180.4 2779.5,181.5 2780.4,182.6 2781.4,183.9 2782.4,185.2 2783.3,186.6 2784.3,188.1 2785.3,189.7 2786.2,191.4 2787.2,193.2 2788.2,195.1 2789.1,197.0 2790.1,199.1 2791.1,201.2 2792.0,203.4 2793.0,205.7 2794.0,208.1 2795.0,210.6 2795.9,213.1 2796.9,215.7 2797.9,218.4 2798.8,221.2 2799.8,224.1 2800.8,227.0 2801.7,230.0 2802.7,233.1 2803.7,236.3 2804.6,239.5 2805.6,242.8 2806.6,246.2 2807.5,249.6 2808.5,253.1 2809.5,256.7 2810.4,260.3 2811.4,264.0 2812.4,267.8 2813.4,271.6 2814.3,275.5 2815.3,279.4 2816.3,283.4 2817.2,287.4 2818.2,291.5 2819.2,295.7 2820.1,299.8 2821.1,304.1 2822.1,308.4 2823.0,312.7 2824.0,317.1 2825.0,321.5 2825.9,325.9 2826.9,330.4 2827.9,334.9 2828.8,339.5 2829.8,344.0 2830.8,348.6 2831.7,353.3 2832.7,358.0 2833.7,362.6 2834.7,367.4 2835.6,372.1 2836.6,376.8 2837.6,381.6 2838.5,386.4 2839.5,391.2 2840.5,396.0 2841.4,400.8 2842.4,405.7 2843.4,410.5 2844.3,415.4 2845.3,420.2 2846.3,425.0 2847.2,429.9 2848.2,434.7 2849.2,439.6 2850.1,444.4 2851.1,449.2 2852.1,454.0 2853.1,458.8 2854.0,463.6 2855.0,468.4 2856.0,473.1 2856.9,477.8 2857.9,482.5 2858.9,487.2 2859.8,491.9 2860.8,496.5 2861.8,501.1 2862.7,505.7 2863.7,510.2 2864.7,514.7 2865.6,519.2 2866.6,523.6 2867.6,528.0 2868.5,532.4 2869.5,536.7 2870.5,540.9 2871.4,545.1 2872.4,549.3 2873.4,553.4 2874.4,557.5 2875.3,561.5 2876.3,565.5 2877.3,569.4 2878.2,573.2 2879.2,577.0 2880.2,580.8 2881.1,584.4 2882.1,588.1 2883.1,591.6 2884.0,595.1 2885.0,598.5 2886.0,601.8 2886.9,605.1 2887.9,608.3 2888.9,611.4 2889.8,614.5 2890.8,617.5 2891.8,620.4 2892.8,623.2 2893.7,626.0 2894.7,628.7 2895.7,631.3 2896.6,633.8 2897.6,636.2 2898.6,638.6 2899.5,640.8 2900.5,643.0 2901.5,645.1 2902.4,647.1 2903.4,649.0 2904.4,650.9 2905.3,652.6 2906.3,654.3 2907.3,655.9 2908.2,657.3 2909.2,658.7 2910.2,660.0 2911.2,661.2 2912.1,662.3 2913.1,663.4 2914.1,664.3 2915.0,665.1 2916.0,665.9 2917.0,666.5 2917.9,667.1 2918.9,667.5 2919.9,667.9 2920.8,668.1 2921.8,668.3 2922.8,668.4 2923.7,668.4 2924.7,668.3 2925.7,668.1 2926.6,667.8 2927.6,667.4 2928.6,666.9 2929.5,666.3 2930.5,665.6 2931.5,664.8 2932.5,663.9 2933.4,663.0 2934.4,661.9 2935.4,660.8 2936.3,659.5 2937.3,658.2 2938.3,656.8 2939.2,655.3 2940.2,653.7 2941.2,652.0 2942.1,650.2 2943.1,648.3 2944.1,646.4 2945.0,644.3 2946.0,642.2 2947.0,640.0 2947.9,637.7 2948.9,635.3 2949.9,632.8 2950.9,630.3 2951.8,627.7 2952.8,625.0 2953.8,622.2 2954.7,619.3 2955.7,616.4 2956.7,613.4 2957.6,610.3 2958.6,607.1 2959.6,603.9 2960.5,600.6 2961.5,597.2 2962.5,593.8 2963.4,590.3 2964.4,586.7 2965.4,583.1 2966.3,579.4 2967.3,575.6 2968.3,571.8 2969.2,567.9 2970.2,564.0 2971.2,560.0 2972.2,556.0 2973.1,551.9 2974.1,547.7 2975.1,543.6 2976.0,539.3 2977.0,535.0 2978.0,530.7 2978.9,526.3 2979.9,521.9 2980.9,517.5 2981.8,513.0 2982.8,508.5 2983.8,503.9 2984.7,499.4 2985.7,494.8 2986.7,490.1 2987.6,485.4 2988.6,480.8 2989.6,476.0 2990.6,471.3 2991.5,466.6 2992.5,461.8 2993.5,457.0 2994.4,452.2 2995.4,447.4 2996.4,442.6 2997.3,437.7 2998.3,432.9 2999.3,428.0 3000.2,423.2 3001.2,418.4 3002.2,413.5 3003.1,408.7 3004.1,403.8 3005.1,399.0 3006.0,394.2 3007.0,389.4 3008.0,384.6 3008.9,379.8 3009.9,375.0 3010.9,370.3 3011.9,365.6 3012.8,360.9 3013.8,356.2 3014.8,351.5 3015.7,346.9 3016.7,342.3 3017.7,337.7 3018.6,333.2 3019.6,328.7 3020.6,324.2 3021.5,319.8 3022.5,315.4 3023.5,311.0 3024.4,306.7 3025.4,302.5 3026.4,298.3 3027.3,294.1 3028.3,290.0 3029.3,285.9 3030.3,281.9 3031.2,277.9 3032.2,274.0 3033.2,270.2 3034.1,266.4 3035.1,262.6 3036.1,259.0 3037.0,255.3 3038.0,251.8 3039.0,248.3 3039.9,244.9 3040.9,241.6 3041.9,238.3 3042.8,235.1 3043.8,232.0 3044.8,228.9 3045.7,225.9 3046.7,223.0 3047.7,220.2 3048.7,217.4 3049.6,214.7 3050.6,212.1 3051.6,209.6 3052.5,207.2 3053.5,204.8 3054.5,202.6 3055.4,200.4 3056.4,198.3 3057.4,196.3 3058.3,194.4 3059.3,192.5 3060.3,190.8 3061.2,189.1 3062.2,187.5 3063.2,186.1 3064.1,184.7 3065.1,183.4 3066.1,182.2 3067.0,181.1 3068.0,180.0 3069.0,179.1 3070.0,178.3 3070.9,177.5 3071.9,176.9 3072.9,176.3 3073.8,175.9 3074.8,175.5 3075.8,175.3 3076.7,175.1 3077.7,175.0 3078.7,175.0 3079.6,175.1 3080.6,175.3 3081.6,175.6 3082.5,176.0 3083.5,176.5 3084.5,177.1 3085.4,177.8 3086.4,178.6 3087.4,179.5 3088.4,180.4 3089.3,181.5 3090.3,182.6 3091.3,183.9 3092.2,185.2 3093.2,186.6 3094.2,188.1 3095.1,189.7 3096.1,191.4 3097.1,193.2 3098.0,195.1 3099.0,197.0 3100.0,199.1 3100.9,201.2 3101.9,203.4 3102.9,205.7 3103.8,208.1 3104.8,210.6 3105.8,213.1 3106.7,215.7 3107.7,218.4 3108.7,221.2 3109.7,224.1 3110.6,227.0 3111.6,230.0 3112.6,233.1 3113.5,236.3 3114.5,239.5 3115.5,242.8 3116.4,246.2 3117.4,249.6 3118.4,253.1 3119.3,256.7 3120.3,260.3 3121.3,264.0 3122.2,267.8 3123.2,271.6 3124.2,275.5 3125.1,279.4 3126.1,283.4 3127.1,287.4 3128.1,291.5 3129.0,295.7 3130.0,299.8 3131.0,304.1 3131.9,308.4 3132.9,312.7 3133.9,317.1 3134.8,321.5 3135.8,325.9 3136.8,330.4 3137.7,334.9 3138.7,339.5 3139.7,344.0 3140.6,348.6 3141.6,353.3 3142.6,358.0 3143.5,362.6 3144.5,367.4 3145.5,372.1 3146.5,376.8 3147.4,381.6 3148.4,386.4 3149.4,391.2 3150.3,396.0 3151.3,400.8 3152.3,405.7 3153.2,410.5 3154.2,415.4 3155.2,420.2 3156.1,425.0 3157.1,429.9 3158.1,434.7 3159.0,439.6 3160.0,444.4 3161.0,449.2 3161.9,454.0 3162.9,458.8 3163.9,463.6 3164.8,468.4 3165.8,473.1 3166.8,477.8 3167.8,482.5 3168.7,487.2 3169.7,491.9 3170.7,496.5 3171.6,501.1 3172.6,505.7 3173.6,510.2 3174.5,514.7 3175.5,519.2 3176.5,523.6 3177.4,528.0 3178.4,532.4 3179.4,536.7 3180.3,540.9 3181.3,545.1 3182.3,549.3 3183.2,553.4 3184.2,557.5 3185.2,561.5 3186.2,565.5 3187.1,569.4 3188.1,573.2 3189.1,577.0 3190.0,580.8 3191.0,584.4 3192.0,588.1 3192.9,591.6 3193.9,595.1 3194.9,598.5 3195.8,601.8 3196.8,605.1 3197.8,608.3 3198.7,611.4 3199.7,614.5 3200.7,617.5 3201.6,620.4 3202.6,623.2 3203.6,626.0 3204.5,628.7 3205.5,631.3 3206.5,633.8 3207.5,636.2 3208.4,638.6 3209.4,640.8 3210.4,643.0 3211.3,645.1 3212.3,647.1 3213.3,649.0 3214.2,650.9 3215.2,652.6 3216.2,654.3 3217.1,655.9 3218.1,657.3 3219.1,658.7 3220.0,660.0 3221.0,661.2 3222.0,662.3 3222.9,663.4 3223.9,664.3 3224.9,665.1 3225.9,665.9 3226.8,666.5 3227.8,667.1 3228.8,667.5 3229.7,667.9 3230.7,668.1 3231.7,668.3 3232.6,668.4 3233.6,668.4 3234.6,668.3 3235.5,668.1 3236.5,667.8 3237.5,667.4 3238.4,666.9 3239.4,666.3 3240.4,665.6 3241.3,664.8 3242.3,663.9 3243.3,663.0 3244.2,661.9 3245.2,660.8 3246.2,659.5 3247.2,658.2 3248.1,656.8 3249.1,655.3 3250.1,653.7 3251.0,652.0 3252.0,650.2 3253.0,648.3 3253.9,646.4 3254.9,644.3 3255.9,642.2 3256.8,640.0 3257.8,637.7 3258.8,635.3 3259.7,632.8 3260.7,630.3 3261.7,627.7 3262.6,625.0 3263.6,622.2 3264.6,619.3 3265.6,616.4 3266.5,613.4 3267.5,610.3 3268.5,607.1 3269.4,603.9 3270.4,600.6 3271.4,597.2 3272.3,593.8 3273.3,590.3 3274.3,586.7 3275.2,583.1 3276.2,579.4 3277.2,575.6 3278.1,571.8 3279.1,567.9 3280.1,564.0 3281.0,560.0 3282.0,556.0 3283.0,551.9 3284.0,547.7 3284.9,543.6 3285.9,539.3 3286.9,535.0 3287.8,530.7 3288.8,526.3 3289.8,521.9 3290.7,517.5 3291.7,513.0 3292.7,508.5 3293.6,503.9 3294.6,499.4 3295.6,494.8 3296.5,490.1 3297.5,485.4 3298.5,480.8 3299.4,476.0 3300.4,471.3 3301.4,466.6 3302.3,461.8 3303.3,457.0 3304.3,452.2 3305.3,447.4 3306.2,442.6 3307.2,437.7 3308.2,432.9 3309.1,428.0 3310.1,423.2 3311.1,418.4 3312.0,413.5 3313.0,408.7"/>
<polyline clip-path="url(#pc)" fill="none" stroke="#0c26fb" stroke-width="3.2" stroke-linejoin="round" points="1763.7,1675.0 1764.7,1672.4 1765.6,1669.8 1766.6,1667.2 1767.6,1664.7 1768.5,1662.1 1769.5,1659.5 1770.5,1656.9 1771.4,1654.4 1772.4,1651.8 1773.4,1649.3 1774.4,1646.8 1775.3,1644.3 1776.3,1641.8 1777.3,1639.3 1778.2,1636.8 1779.2,1634.3 1780.2,1631.9 1781.1,1629.5 1782.1,1627.0 1783.1,1624.7 1784.0,1622.3 1785.0,1619.9 1786.0,1617.6 1786.9,1615.3 1787.9,1613.0 1788.9,1610.7 1789.8,1608.5 1790.8,1606.3 1791.8,1604.1 1792.7,1601.9 1793.7,1599.8 1794.7,1597.7 1795.7,1595.7 1796.6,1593.6 1797.6,1591.6 1798.6,1589.6 1799.5,1587.7 1800.5,1585.8 1801.5,1583.9 1802.4,1582.1 1803.4,1580.3 1804.4,1578.5 1805.3,1576.8 1806.3,1575.1 1807.3,1573.4 1808.2,1571.8 1809.2,1570.3 1810.2,1568.7 1811.1,1567.2 1812.1,1565.8 1813.1,1564.4 1814.1,1563.0 1815.0,1561.7 1816.0,1560.4 1817.0,1559.2 1817.9,1558.0 1818.9,1556.9 1819.9,1555.8 1820.8,1554.7 1821.8,1553.7 1822.8,1552.8 1823.7,1551.9 1824.7,1551.0 1825.7,1550.2 1826.6,1549.4 1827.6,1548.7 1828.6,1548.0 1829.5,1547.4 1830.5,1546.8 1831.5,1546.3 1832.5,1545.9 1833.4,1545.4 1834.4,1545.1 1835.4,1544.8 1836.3,1544.5 1837.3,1544.3 1838.3,1544.1 1839.2,1544.0 1840.2,1543.9 1841.2,1543.9 1842.1,1543.9 1843.1,1544.0 1844.1,1544.2 1845.0,1544.3 1846.0,1544.6 1847.0,1544.9 1847.9,1545.2 1848.9,1545.6 1849.9,1546.0 1850.8,1546.5 1851.8,1547.1 1852.8,1547.7 1853.8,1548.3 1854.7,1549.0 1855.7,1549.7 1856.7,1550.5 1857.6,1551.3 1858.6,1552.2 1859.6,1553.1 1860.5,1554.1 1861.5,1555.1 1862.5,1556.2 1863.4,1557.3 1864.4,1558.5 1865.4,1559.7 1866.3,1560.9 1867.3,1562.2 1868.3,1563.6 1869.2,1564.9 1870.2,1566.4 1871.2,1567.8 1872.2,1569.3 1873.1,1570.9 1874.1,1572.5 1875.1,1574.1 1876.0,1575.8 1877.0,1577.5 1878.0,1579.2 1878.9,1581.0 1879.9,1582.8 1880.9,1584.7 1881.8,1586.6 1882.8,1588.5 1883.8,1590.4 1884.7,1592.4 1885.7,1594.4 1886.7,1596.5 1887.6,1598.6 1888.6,1600.7 1889.6,1602.8 1890.5,1605.0 1891.5,1607.2 1892.5,1609.4 1893.5,1611.7 1894.4,1613.9 1895.4,1616.2 1896.4,1618.5 1897.3,1620.9 1898.3,1623.2 1899.3,1625.6 1900.2,1628.0 1901.2,1630.4 1902.2,1632.9 1903.1,1635.3 1904.1,1637.8 1905.1,1640.3 1906.0,1642.8 1907.0,1645.3 1908.0,1647.8 1908.9,1650.3 1909.9,1652.9 1910.9,1655.4 1911.9,1658.0 1912.8,1660.6 1913.8,1663.1 1914.8,1665.7 1915.7,1668.3 1916.7,1670.9 1917.7,1673.4 1918.6,1676.0 1919.6,1678.6 1920.6,1681.2 1921.5,1683.8 1922.5,1686.3 1923.5,1688.9 1924.4,1691.5 1925.4,1694.1 1926.4,1696.6 1927.3,1699.2 1928.3,1701.7 1929.3,1704.2 1930.2,1706.7 1931.2,1709.2 1932.2,1711.7 1933.2,1714.2 1934.1,1716.7 1935.1,1719.1 1936.1,1721.5 1937.0,1724.0 1938.0,1726.3 1939.0,1728.7 1939.9,1731.1 1940.9,1733.4 1941.9,1735.7 1942.8,1738.0 1943.8,1740.3 1944.8,1742.5 1945.7,1744.7 1946.7,1746.9 1947.7,1749.1 1948.6,1751.2 1949.6,1753.3 1950.6,1755.3 1951.6,1757.4 1952.5,1759.4 1953.5,1761.4 1954.5,1763.3 1955.4,1765.2 1956.4,1767.1 1957.4,1768.9 1958.3,1770.7 1959.3,1772.5 1960.3,1774.2 1961.2,1775.9 1962.2,1777.6 1963.2,1779.2 1964.1,1780.7 1965.1,1782.3 1966.1,1783.8 1967.0,1785.2 1968.0,1786.6 1969.0,1788.0 1970.0,1789.3 1970.9,1790.6 1971.9,1791.8 1972.9,1793.0 1973.8,1794.1 1974.8,1795.2 1975.8,1796.3 1976.7,1797.3 1977.7,1798.2 1978.7,1799.1 1979.6,1800.0 1980.6,1800.8 1981.6,1801.6 1982.5,1802.3 1983.5,1803.0 1984.5,1803.6 1985.4,1804.2 1986.4,1804.7 1987.4,1805.1 1988.3,1805.6 1989.3,1805.9 1990.3,1806.2 1991.3,1806.5 1992.2,1806.7 1993.2,1806.9 1994.2,1807.0 1995.1,1807.1 1996.1,1807.1 1997.1,1807.1 1998.0,1807.0 1999.0,1806.8 2000.0,1806.7 2000.9,1806.4 2001.9,1806.1 2002.9,1805.8 2003.8,1805.4 2004.8,1805.0 2005.8,1804.5 2006.7,1803.9 2007.7,1803.3 2008.7,1802.7 2009.7,1802.0 2010.6,1801.3 2011.6,1800.5 2012.6,1799.7 2013.5,1798.8 2014.5,1797.9 2015.5,1796.9 2016.4,1795.9 2017.4,1794.8 2018.4,1793.7 2019.3,1792.5 2020.3,1791.3 2021.3,1790.1 2022.2,1788.8 2023.2,1787.4 2024.2,1786.1 2025.1,1784.6 2026.1,1783.2 2027.1,1781.7 2028.0,1780.1 2029.0,1778.5 2030.0,1776.9 2031.0,1775.2 2031.9,1773.5 2032.9,1771.8 2033.9,1770.0 2034.8,1768.2 2035.8,1766.3 2036.8,1764.4 2037.7,1762.5 2038.7,1760.6 2039.7,1758.6 2040.6,1756.6 2041.6,1754.5 2042.6,1752.4 2043.5,1750.3 2044.5,1748.2 2045.5,1746.0 2046.4,1743.8 2047.4,1741.6 2048.4,1739.3 2049.4,1737.1 2050.3,1734.8 2051.3,1732.5 2052.3,1730.1 2053.2,1727.8 2054.2,1725.4 2055.2,1723.0 2056.1,1720.6 2057.1,1718.1 2058.1,1715.7 2059.0,1713.2 2060.0,1710.7 2061.0,1708.2 2061.9,1705.7 2062.9,1703.2 2063.9,1700.7 2064.8,1698.1 2065.8,1695.6 2066.8,1693.0 2067.8,1690.4 2068.7,1687.9 2069.7,1685.3 2070.7,1682.7 2071.6,1680.1 2072.6,1677.6 2073.6,1675.0 2074.5,1672.4 2075.5,1669.8 2076.5,1667.2 2077.4,1664.7 2078.4,1662.1 2079.4,1659.5 2080.3,1656.9 2081.3,1654.4 2082.3,1651.8 2083.2,1649.3 2084.2,1646.8 2085.2,1644.3 2086.1,1641.8 2087.1,1639.3 2088.1,1636.8 2089.1,1634.3 2090.0,1631.9 2091.0,1629.5 2092.0,1627.0 2092.9,1624.7 2093.9,1622.3 2094.9,1619.9 2095.8,1617.6 2096.8,1615.3 2097.8,1613.0 2098.7,1610.7 2099.7,1608.5 2100.7,1606.3 2101.6,1604.1 2102.6,1601.9 2103.6,1599.8 2104.5,1597.7 2105.5,1595.7 2106.5,1593.6 2107.5,1591.6 2108.4,1589.6 2109.4,1587.7 2110.4,1585.8 2111.3,1583.9 2112.3,1582.1 2113.3,1580.3 2114.2,1578.5 2115.2,1576.8 2116.2,1575.1 2117.1,1573.4 2118.1,1571.8 2119.1,1570.3 2120.0,1568.7 2121.0,1567.2 2122.0,1565.8 2122.9,1564.4 2123.9,1563.0 2124.9,1561.7 2125.8,1560.4 2126.8,1559.2 2127.8,1558.0 2128.8,1556.9 2129.7,1555.8 2130.7,1554.7 2131.7,1553.7 2132.6,1552.8 2133.6,1551.9 2134.6,1551.0 2135.5,1550.2 2136.5,1549.4 2137.5,1548.7 2138.4,1548.0 2139.4,1547.4 2140.4,1546.8 2141.3,1546.3 2142.3,1545.9 2143.3,1545.4 2144.2,1545.1 2145.2,1544.8 2146.2,1544.5 2147.2,1544.3 2148.1,1544.1 2149.1,1544.0 2150.1,1543.9 2151.0,1543.9 2152.0,1543.9 2153.0,1544.0 2153.9,1544.2 2154.9,1544.3 2155.9,1544.6 2156.8,1544.9 2157.8,1545.2 2158.8,1545.6 2159.7,1546.0 2160.7,1546.5 2161.7,1547.1 2162.6,1547.7 2163.6,1548.3 2164.6,1549.0 2165.5,1549.7 2166.5,1550.5 2167.5,1551.3 2168.5,1552.2 2169.4,1553.1 2170.4,1554.1 2171.4,1555.1 2172.3,1556.2 2173.3,1557.3 2174.3,1558.5 2175.2,1559.7 2176.2,1560.9 2177.2,1562.2 2178.1,1563.6 2179.1,1564.9 2180.1,1566.4 2181.0,1567.8 2182.0,1569.3 2183.0,1570.9 2183.9,1572.5 2184.9,1574.1 2185.9,1575.8 2186.9,1577.5 2187.8,1579.2 2188.8,1581.0 2189.8,1582.8 2190.7,1584.7 2191.7,1586.6 2192.7,1588.5 2193.6,1590.4 2194.6,1592.4 2195.6,1594.4 2196.5,1596.5 2197.5,1598.6 2198.5,1600.7 2199.4,1602.8 2200.4,1605.0 2201.4,1607.2 2202.3,1609.4 2203.3,1611.7 2204.3,1613.9 2205.3,1616.2 2206.2,1618.5 2207.2,1620.9 2208.2,1623.2 2209.1,1625.6 2210.1,1628.0 2211.1,1630.4 2212.0,1632.9 2213.0,1635.3 2214.0,1637.8 2214.9,1640.3 2215.9,1642.8 2216.9,1645.3 2217.8,1647.8 2218.8,1650.3 2219.8,1652.9 2220.7,1655.4 2221.7,1658.0 2222.7,1660.6 2223.6,1663.1 2224.6,1665.7 2225.6,1668.3 2226.6,1670.9 2227.5,1673.4 2228.5,1676.0 2229.5,1678.6 2230.4,1681.2 2231.4,1683.8 2232.4,1686.3 2233.3,1688.9 2234.3,1691.5 2235.3,1694.1 2236.2,1696.6 2237.2,1699.2 2238.2,1701.7 2239.1,1704.2 2240.1,1706.7 2241.1,1709.2 2242.0,1711.7 2243.0,1714.2 2244.0,1716.7 2245.0,1719.1 2245.9,1721.5 2246.9,1724.0 2247.9,1726.3 2248.8,1728.7 2249.8,1731.1 2250.8,1733.4 2251.7,1735.7 2252.7,1738.0 2253.7,1740.3 2254.6,1742.5 2255.6,1744.7 2256.6,1746.9 2257.5,1749.1 2258.5,1751.2 2259.5,1753.3 2260.4,1755.3 2261.4,1757.4 2262.4,1759.4 2263.3,1761.4 2264.3,1763.3 2265.3,1765.2 2266.3,1767.1 2267.2,1768.9 2268.2,1770.7 2269.2,1772.5 2270.1,1774.2 2271.1,1775.9 2272.1,1777.6 2273.0,1779.2 2274.0,1780.7 2275.0,1782.3 2275.9,1783.8 2276.9,1785.2 2277.9,1786.6 2278.8,1788.0 2279.8,1789.3 2280.8,1790.6 2281.7,1791.8 2282.7,1793.0 2283.7,1794.1 2284.7,1795.2 2285.6,1796.3 2286.6,1797.3 2287.6,1798.2 2288.5,1799.1 2289.5,1800.0 2290.5,1800.8 2291.4,1801.6 2292.4,1802.3 2293.4,1803.0 2294.3,1803.6 2295.3,1804.2 2296.3,1804.7 2297.2,1805.1 2298.2,1805.6 2299.2,1805.9 2300.1,1806.2 2301.1,1806.5 2302.1,1806.7 2303.1,1806.9 2304.0,1807.0 2305.0,1807.1 2306.0,1807.1 2306.9,1807.1 2307.9,1807.0 2308.9,1806.8 2309.8,1806.7 2310.8,1806.4 2311.8,1806.1 2312.7,1805.8 2313.7,1805.4 2314.7,1805.0 2315.6,1804.5 2316.6,1803.9 2317.6,1803.3 2318.5,1802.7 2319.5,1802.0 2320.5,1801.3 2321.4,1800.5 2322.4,1799.7 2323.4,1798.8 2324.4,1797.9 2325.3,1796.9 2326.3,1795.9 2327.3,1794.8 2328.2,1793.7 2329.2,1792.5 2330.2,1791.3 2331.1,1790.1 2332.1,1788.8 2333.1,1787.4 2334.0,1786.1 2335.0,1784.6 2336.0,1783.2 2336.9,1781.7 2337.9,1780.1 2338.9,1778.5 2339.8,1776.9 2340.8,1775.2 2341.8,1773.5 2342.8,1771.8 2343.7,1770.0 2344.7,1768.2 2345.7,1766.3 2346.6,1764.4 2347.6,1762.5 2348.6,1760.6 2349.5,1758.6 2350.5,1756.6 2351.5,1754.5 2352.4,1752.4 2353.4,1750.3 2354.4,1748.2 2355.3,1746.0 2356.3,1743.8 2357.3,1741.6 2358.2,1739.3 2359.2,1737.1 2360.2,1734.8 2361.1,1732.5 2362.1,1730.1 2363.1,1727.8 2364.1,1725.4 2365.0,1723.0 2366.0,1720.6 2367.0,1718.1 2367.9,1715.7 2368.9,1713.2 2369.9,1710.7 2370.8,1708.2 2371.8,1705.7 2372.8,1703.2 2373.7,1700.7 2374.7,1698.1 2375.7,1695.6 2376.6,1693.0 2377.6,1690.4 2378.6,1687.9 2379.5,1685.3 2380.5,1682.7 2381.5,1680.1 2382.5,1677.6 2383.4,1675.0 2384.4,1672.4 2385.4,1669.8 2386.3,1667.2 2387.3,1664.7 2388.3,1662.1 2389.2,1659.5 2390.2,1656.9 2391.2,1654.4 2392.1,1651.8 2393.1,1649.3 2394.1,1646.8 2395.0,1644.3 2396.0,1641.8 2397.0,1639.3 2397.9,1636.8 2398.9,1634.3 2399.9,1631.9 2400.8,1629.5 2401.8,1627.0 2402.8,1624.7 2403.8,1622.3 2404.7,1619.9 2405.7,1617.6 2406.7,1615.3 2407.6,1613.0 2408.6,1610.7 2409.6,1608.5 2410.5,1606.3 2411.5,1604.1 2412.5,1601.9 2413.4,1599.8 2414.4,1597.7 2415.4,1595.7 2416.3,1593.6 2417.3,1591.6 2418.3,1589.6 2419.2,1587.7 2420.2,1585.8 2421.2,1583.9 2422.2,1582.1 2423.1,1580.3 2424.1,1578.5 2425.1,1576.8 2426.0,1575.1 2427.0,1573.4 2428.0,1571.8 2428.9,1570.3 2429.9,1568.7 2430.9,1567.2 2431.8,1565.8 2432.8,1564.4 2433.8,1563.0 2434.7,1561.7 2435.7,1560.4 2436.7,1559.2 2437.6,1558.0 2438.6,1556.9 2439.6,1555.8 2440.6,1554.7 2441.5,1553.7 2442.5,1552.8 2443.5,1551.9 2444.4,1551.0 2445.4,1550.2 2446.4,1549.4 2447.3,1548.7 2448.3,1548.0 2449.3,1547.4 2450.2,1546.8 2451.2,1546.3 2452.2,1545.9 2453.1,1545.4 2454.1,1545.1 2455.1,1544.8 2456.0,1544.5 2457.0,1544.3 2458.0,1544.1 2458.9,1544.0 2459.9,1543.9 2460.9,1543.9 2461.9,1543.9 2462.8,1544.0 2463.8,1544.2 2464.8,1544.3 2465.7,1544.6 2466.7,1544.9 2467.7,1545.2 2468.6,1545.6 2469.6,1546.0 2470.6,1546.5 2471.5,1547.1 2472.5,1547.7 2473.5,1548.3 2474.4,1549.0 2475.4,1549.7 2476.4,1550.5 2477.3,1551.3 2478.3,1552.2 2479.3,1553.1 2480.3,1554.1 2481.2,1555.1 2482.2,1556.2 2483.2,1557.3 2484.1,1558.5 2485.1,1559.7 2486.1,1560.9 2487.0,1562.2 2488.0,1563.6 2489.0,1564.9 2489.9,1566.4 2490.9,1567.8 2491.9,1569.3 2492.8,1570.9 2493.8,1572.5 2494.8,1574.1 2495.7,1575.8 2496.7,1577.5 2497.7,1579.2 2498.6,1581.0 2499.6,1582.8 2500.6,1584.7 2501.6,1586.6 2502.5,1588.5 2503.5,1590.4 2504.5,1592.4 2505.4,1594.4 2506.4,1596.5 2507.4,1598.6 2508.3,1600.7 2509.3,1602.8 2510.3,1605.0 2511.2,1607.2 2512.2,1609.4 2513.2,1611.7 2514.1,1613.9 2515.1,1616.2 2516.1,1618.5 2517.0,1620.9 2518.0,1623.2 2519.0,1625.6 2520.0,1628.0 2520.9,1630.4 2521.9,1632.9 2522.9,1635.3 2523.8,1637.8 2524.8,1640.3 2525.8,1642.8 2526.7,1645.3 2527.7,1647.8 2528.7,1650.3 2529.6,1652.9 2530.6,1655.4 2531.6,1658.0 2532.5,1660.6 2533.5,1663.1 2534.5,1665.7 2535.4,1668.3 2536.4,1670.9 2537.4,1673.4 2538.3,1676.0 2539.3,1678.6 2540.3,1681.2 2541.3,1683.8 2542.2,1686.3 2543.2,1688.9 2544.2,1691.5 2545.1,1694.1 2546.1,1696.6 2547.1,1699.2 2548.0,1701.7 2549.0,1704.2 2550.0,1706.7 2550.9,1709.2 2551.9,1711.7 2552.9,1714.2 2553.8,1716.7 2554.8,1719.1 2555.8,1721.5 2556.7,1724.0 2557.7,1726.3 2558.7,1728.7 2559.7,1731.1 2560.6,1733.4 2561.6,1735.7 2562.6,1738.0 2563.5,1740.3 2564.5,1742.5 2565.5,1744.7 2566.4,1746.9 2567.4,1749.1 2568.4,1751.2 2569.3,1753.3 2570.3,1755.3 2571.3,1757.4 2572.2,1759.4 2573.2,1761.4 2574.2,1763.3 2575.1,1765.2 2576.1,1767.1 2577.1,1768.9 2578.1,1770.7 2579.0,1772.5 2580.0,1774.2 2581.0,1775.9 2581.9,1777.6 2582.9,1779.2 2583.9,1780.7 2584.8,1782.3 2585.8,1783.8 2586.8,1785.2 2587.7,1786.6 2588.7,1788.0 2589.7,1789.3 2590.6,1790.6 2591.6,1791.8 2592.6,1793.0 2593.5,1794.1 2594.5,1795.2 2595.5,1796.3 2596.4,1797.3 2597.4,1798.2 2598.4,1799.1 2599.4,1800.0 2600.3,1800.8 2601.3,1801.6 2602.3,1802.3 2603.2,1803.0 2604.2,1803.6 2605.2,1804.2 2606.1,1804.7 2607.1,1805.1 2608.1,1805.6 2609.0,1805.9 2610.0,1806.2 2611.0,1806.5 2611.9,1806.7 2612.9,1806.9 2613.9,1807.0 2614.8,1807.1 2615.8,1807.1 2616.8,1807.1 2617.8,1807.0 2618.7,1806.8 2619.7,1806.7 2620.7,1806.4 2621.6,1806.1 2622.6,1805.8 2623.6,1805.4 2624.5,1805.0 2625.5,1804.5 2626.5,1803.9 2627.4,1803.3 2628.4,1802.7 2629.4,1802.0 2630.3,1801.3 2631.3,1800.5 2632.3,1799.7 2633.2,1798.8 2634.2,1797.9 2635.2,1796.9 2636.1,1795.9 2637.1,1794.8 2638.1,1793.7 2639.1,1792.5 2640.0,1791.3 2641.0,1790.1 2642.0,1788.8 2642.9,1787.4 2643.9,1786.1 2644.9,1784.6 2645.8,1783.2 2646.8,1781.7 2647.8,1780.1 2648.7,1778.5 2649.7,1776.9 2650.7,1775.2 2651.6,1773.5 2652.6,1771.8 2653.6,1770.0 2654.5,1768.2 2655.5,1766.3 2656.5,1764.4 2657.5,1762.5 2658.4,1760.6 2659.4,1758.6 2660.4,1756.6 2661.3,1754.5 2662.3,1752.4 2663.3,1750.3 2664.2,1748.2 2665.2,1746.0 2666.2,1743.8 2667.1,1741.6 2668.1,1739.3 2669.1,1737.1 2670.0,1734.8 2671.0,1732.5 2672.0,1730.1 2672.9,1727.8 2673.9,1725.4 2674.9,1723.0 2675.9,1720.6 2676.8,1718.1 2677.8,1715.7 2678.8,1713.2 2679.7,1710.7 2680.7,1708.2 2681.7,1705.7 2682.6,1703.2 2683.6,1700.7 2684.6,1698.1 2685.5,1695.6 2686.5,1693.0 2687.5,1690.4 2688.4,1687.9 2689.4,1685.3 2690.4,1682.7 2691.3,1680.1 2692.3,1677.6 2693.3,1675.0 2694.2,1672.4 2695.2,1669.8 2696.2,1667.2 2697.2,1664.7 2698.1,1662.1 2699.1,1659.5 2700.1,1656.9 2701.0,1654.4 2702.0,1651.8 2703.0,1649.3 2703.9,1646.8 2704.9,1644.3 2705.9,1641.8 2706.8,1639.3 2707.8,1636.8 2708.8,1634.3 2709.7,1631.9 2710.7,1629.5 2711.7,1627.0 2712.6,1624.7 2713.6,1622.3 2714.6,1619.9 2715.6,1617.6 2716.5,1615.3 2717.5,1613.0 2718.5,1610.7 2719.4,1608.5 2720.4,1606.3 2721.4,1604.1 2722.3,1601.9 2723.3,1599.8 2724.3,1597.7 2725.2,1595.7 2726.2,1593.6 2727.2,1591.6 2728.1,1589.6 2729.1,1587.7 2730.1,1585.8 2731.0,1583.9 2732.0,1582.1 2733.0,1580.3 2733.9,1578.5 2734.9,1576.8 2735.9,1575.1 2736.9,1573.4 2737.8,1571.8 2738.8,1570.3 2739.8,1568.7 2740.7,1567.2 2741.7,1565.8 2742.7,1564.4 2743.6,1563.0 2744.6,1561.7 2745.6,1560.4 2746.5,1559.2 2747.5,1558.0 2748.5,1556.9 2749.4,1555.8 2750.4,1554.7 2751.4,1553.7 2752.3,1552.8 2753.3,1551.9 2754.3,1551.0 2755.3,1550.2 2756.2,1549.4 2757.2,1548.7 2758.2,1548.0 2759.1,1547.4 2760.1,1546.8 2761.1,1546.3 2762.0,1545.9 2763.0,1545.4 2764.0,1545.1 2764.9,1544.8 2765.9,1544.5 2766.9,1544.3 2767.8,1544.1 2768.8,1544.0 2769.8,1543.9 2770.7,1543.9 2771.7,1543.9 2772.7,1544.0 2773.6,1544.2 2774.6,1544.3 2775.6,1544.6 2776.6,1544.9 2777.5,1545.2 2778.5,1545.6 2779.5,1546.0 2780.4,1546.5 2781.4,1547.1 2782.4,1547.7 2783.3,1548.3 2784.3,1549.0 2785.3,1549.7 2786.2,1550.5 2787.2,1551.3 2788.2,1552.2 2789.1,1553.1 2790.1,1554.1 2791.1,1555.1 2792.0,1556.2 2793.0,1557.3 2794.0,1558.5 2795.0,1559.7 2795.9,1560.9 2796.9,1562.2 2797.9,1563.6 2798.8,1564.9 2799.8,1566.4 2800.8,1567.8 2801.7,1569.3 2802.7,1570.9 2803.7,1572.5 2804.6,1574.1 2805.6,1575.8 2806.6,1577.5 2807.5,1579.2 2808.5,1581.0 2809.5,1582.8 2810.4,1584.7 2811.4,1586.6 2812.4,1588.5 2813.4,1590.4 2814.3,1592.4 2815.3,1594.4 2816.3,1596.5 2817.2,1598.6 2818.2,1600.7 2819.2,1602.8 2820.1,1605.0 2821.1,1607.2 2822.1,1609.4 2823.0,1611.7 2824.0,1613.9 2825.0,1616.2 2825.9,1618.5 2826.9,1620.9 2827.9,1623.2 2828.8,1625.6 2829.8,1628.0 2830.8,1630.4 2831.7,1632.9 2832.7,1635.3 2833.7,1637.8 2834.7,1640.3 2835.6,1642.8 2836.6,1645.3 2837.6,1647.8 2838.5,1650.3 2839.5,1652.9 2840.5,1655.4 2841.4,1658.0 2842.4,1660.6 2843.4,1663.1 2844.3,1665.7 2845.3,1668.3 2846.3,1670.9 2847.2,1673.4 2848.2,1676.0 2849.2,1678.6 2850.1,1681.2 2851.1,1683.8 2852.1,1686.3 2853.1,1688.9 2854.0,1691.5 2855.0,1694.1 2856.0,1696.6 2856.9,1699.2 2857.9,1701.7 2858.9,1704.2 2859.8,1706.7 2860.8,1709.2 2861.8,1711.7 2862.7,1714.2 2863.7,1716.7 2864.7,1719.1 2865.6,1721.5 2866.6,1724.0 2867.6,1726.3 2868.5,1728.7 2869.5,1731.1 2870.5,1733.4 2871.4,1735.7 2872.4,1738.0 2873.4,1740.3 2874.4,1742.5 2875.3,1744.7 2876.3,1746.9 2877.3,1749.1 2878.2,1751.2 2879.2,1753.3 2880.2,1755.3 2881.1,1757.4 2882.1,1759.4 2883.1,1761.4 2884.0,1763.3 2885.0,1765.2 2886.0,1767.1 2886.9,1768.9 2887.9,1770.7 2888.9,1772.5 2889.8,1774.2 2890.8,1775.9 2891.8,1777.6 2892.8,1779.2 2893.7,1780.7 2894.7,1782.3 2895.7,1783.8 2896.6,1785.2 2897.6,1786.6 2898.6,1788.0 2899.5,1789.3 2900.5,1790.6 2901.5,1791.8 2902.4,1793.0 2903.4,1794.1 2904.4,1795.2 2905.3,1796.3 2906.3,1797.3 2907.3,1798.2 2908.2,1799.1 2909.2,1800.0 2910.2,1800.8 2911.2,1801.6 2912.1,1802.3 2913.1,1803.0 2914.1,1803.6 2915.0,1804.2 2916.0,1804.7 2917.0,1805.1 2917.9,1805.6 2918.9,1805.9 2919.9,1806.2 2920.8,1806.5 2921.8,1806.7 2922.8,1806.9 2923.7,1807.0 2924.7,1807.1 2925.7,1807.1 2926.6,1807.1 2927.6,1807.0 2928.6,1806.8 2929.5,1806.7 2930.5,1806.4 2931.5,1806.1 2932.5,1805.8 2933.4,1805.4 2934.4,1805.0 2935.4,1804.5 2936.3,1803.9 2937.3,1803.3 2938.3,1802.7 2939.2,1802.0 2940.2,1801.3 2941.2,1800.5 2942.1,1799.7 2943.1,1798.8 2944.1,1797.9 2945.0,1796.9 2946.0,1795.9 2947.0,1794.8 2947.9,1793.7 2948.9,1792.5 2949.9,1791.3 2950.9,1790.1 2951.8,1788.8 2952.8,1787.4 2953.8,1786.1 2954.7,1784.6 2955.7,1783.2 2956.7,1781.7 2957.6,1780.1 2958.6,1778.5 2959.6,1776.9 2960.5,1775.2 2961.5,1773.5 2962.5,1771.8 2963.4,1770.0 2964.4,1768.2 2965.4,1766.3 2966.3,1764.4 2967.3,1762.5 2968.3,1760.6 2969.2,1758.6 2970.2,1756.6 2971.2,1754.5 2972.2,1752.4 2973.1,1750.3 2974.1,1748.2 2975.1,1746.0 2976.0,1743.8 2977.0,1741.6 2978.0,1739.3 2978.9,1737.1 2979.9,1734.8 2980.9,1732.5 2981.8,1730.1 2982.8,1727.8 2983.8,1725.4 2984.7,1723.0 2985.7,1720.6 2986.7,1718.1 2987.6,1715.7 2988.6,1713.2 2989.6,1710.7 2990.6,1708.2 2991.5,1705.7 2992.5,1703.2 2993.5,1700.7 2994.4,1698.1 2995.4,1695.6 2996.4,1693.0 2997.3,1690.4 2998.3,1687.9 2999.3,1685.3 3000.2,1682.7 3001.2,1680.1 3002.2,1677.6 3003.1,1675.0 3004.1,1672.4 3005.1,1669.8 3006.0,1667.2 3007.0,1664.7 3008.0,1662.1 3008.9,1659.5 3009.9,1656.9 3010.9,1654.4 3011.9,1651.8 3012.8,1649.3 3013.8,1646.8 3014.8,1644.3 3015.7,1641.8 3016.7,1639.3 3017.7,1636.8 3018.6,1634.3 3019.6,1631.9 3020.6,1629.5 3021.5,1627.0 3022.5,1624.7 3023.5,1622.3 3024.4,1619.9 3025.4,1617.6 3026.4,1615.3 3027.3,1613.0 3028.3,1610.7 3029.3,1608.5 3030.3,1606.3 3031.2,1604.1 3032.2,1601.9 3033.2,1599.8 3034.1,1597.7 3035.1,1595.7 3036.1,1593.6 3037.0,1591.6 3038.0,1589.6 3039.0,1587.7 3039.9,1585.8 3040.9,1583.9 3041.9,1582.1 3042.8,1580.3 3043.8,1578.5 3044.8,1576.8 3045.7,1575.1 3046.7,1573.4 3047.7,1571.8 3048.7,1570.3 3049.6,1568.7 3050.6,1567.2 3051.6,1565.8 3052.5,1564.4 3053.5,1563.0 3054.5,1561.7 3055.4,1560.4 3056.4,1559.2 3057.4,1558.0 3058.3,1556.9 3059.3,1555.8 3060.3,1554.7 3061.2,1553.7 3062.2,1552.8 3063.2,1551.9 3064.1,1551.0 3065.1,1550.2 3066.1,1549.4 3067.0,1548.7 3068.0,1548.0 3069.0,1547.4 3070.0,1546.8 3070.9,1546.3 3071.9,1545.9 3072.9,1545.4 3073.8,1545.1 3074.8,1544.8 3075.8,1544.5 3076.7,1544.3 3077.7,1544.1 3078.7,1544.0 3079.6,1543.9 3080.6,1543.9 3081.6,1543.9 3082.5,1544.0 3083.5,1544.2 3084.5,1544.3 3085.4,1544.6 3086.4,1544.9 3087.4,1545.2 3088.4,1545.6 3089.3,1546.0 3090.3,1546.5 3091.3,1547.1 3092.2,1547.7 3093.2,1548.3 3094.2,1549.0 3095.1,1549.7 3096.1,1550.5 3097.1,1551.3 3098.0,1552.2 3099.0,1553.1 3100.0,1554.1 3100.9,1555.1 3101.9,1556.2 3102.9,1557.3 3103.8,1558.5 3104.8,1559.7 3105.8,1560.9 3106.7,1562.2 3107.7,1563.6 3108.7,1564.9 3109.7,1566.4 3110.6,1567.8 3111.6,1569.3 3112.6,1570.9 3113.5,1572.5 3114.5,1574.1 3115.5,1575.8 3116.4,1577.5 3117.4,1579.2 3118.4,1581.0 3119.3,1582.8 3120.3,1584.7 3121.3,1586.6 3122.2,1588.5 3123.2,1590.4 3124.2,1592.4 3125.1,1594.4 3126.1,1596.5 3127.1,1598.6 3128.1,1600.7 3129.0,1602.8 3130.0,1605.0 3131.0,1607.2 3131.9,1609.4 3132.9,1611.7 3133.9,1613.9 3134.8,1616.2 3135.8,1618.5 3136.8,1620.9 3137.7,1623.2 3138.7,1625.6 3139.7,1628.0 3140.6,1630.4 3141.6,1632.9 3142.6,1635.3 3143.5,1637.8 3144.5,1640.3 3145.5,1642.8 3146.5,1645.3 3147.4,1647.8 3148.4,1650.3 3149.4,1652.9 3150.3,1655.4 3151.3,1658.0 3152.3,1660.6 3153.2,1663.1 3154.2,1665.7 3155.2,1668.3 3156.1,1670.9 3157.1,1673.4 3158.1,1676.0 3159.0,1678.6 3160.0,1681.2 3161.0,1683.8 3161.9,1686.3 3162.9,1688.9 3163.9,1691.5 3164.8,1694.1 3165.8,1696.6 3166.8,1699.2 3167.8,1701.7 3168.7,1704.2 3169.7,1706.7 3170.7,1709.2 3171.6,1711.7 3172.6,1714.2 3173.6,1716.7 3174.5,1719.1 3175.5,1721.5 3176.5,1724.0 3177.4,1726.3 3178.4,1728.7 3179.4,1731.1 3180.3,1733.4 3181.3,1735.7 3182.3,1738.0 3183.2,1740.3 3184.2,1742.5 3185.2,1744.7 3186.2,1746.9 3187.1,1749.1 3188.1,1751.2 3189.1,1753.3 3190.0,1755.3 3191.0,1757.4 3192.0,1759.4 3192.9,1761.4 3193.9,1763.3 3194.9,1765.2 3195.8,1767.1 3196.8,1768.9 3197.8,1770.7 3198.7,1772.5 3199.7,1774.2 3200.7,1775.9 3201.6,1777.6 3202.6,1779.2 3203.6,1780.7 3204.5,1782.3 3205.5,1783.8 3206.5,1785.2 3207.5,1786.6 3208.4,1788.0 3209.4,1789.3 3210.4,1790.6 3211.3,1791.8 3212.3,1793.0 3213.3,1794.1 3214.2,1795.2 3215.2,1796.3 3216.2,1797.3 3217.1,1798.2 3218.1,1799.1 3219.1,1800.0 3220.0,1800.8 3221.0,1801.6 3222.0,1802.3 3222.9,1803.0 3223.9,1803.6 3224.9,1804.2 3225.9,1804.7 3226.8,1805.1 3227.8,1805.6 3228.8,1805.9 3229.7,1806.2 3230.7,1806.5 3231.7,1806.7 3232.6,1806.9 3233.6,1807.0 3234.6,1807.1 3235.5,1807.1 3236.5,1807.1 3237.5,1807.0 3238.4,1806.8 3239.4,1806.7 3240.4,1806.4 3241.3,1806.1 3242.3,1805.8 3243.3,1805.4 3244.2,1805.0 3245.2,1804.5 3246.2,1803.9 3247.2,1803.3 3248.1,1802.7 3249.1,1802.0 3250.1,1801.3 3251.0,1800.5 3252.0,1799.7 3253.0,1798.8 3253.9,1797.9 3254.9,1796.9 3255.9,1795.9 3256.8,1794.8 3257.8,1793.7 3258.8,1792.5 3259.7,1791.3 3260.7,1790.1 3261.7,1788.8 3262.6,1787.4 3263.6,1786.1 3264.6,1784.6 3265.6,1783.2 3266.5,1781.7 3267.5,1780.1 3268.5,1778.5 3269.4,1776.9 3270.4,1775.2 3271.4,1773.5 3272.3,1771.8 3273.3,1770.0 3274.3,1768.2 3275.2,1766.3 3276.2,1764.4 3277.2,1762.5 3278.1,1760.6 3279.1,1758.6 3280.1,1756.6 3281.0,1754.5 3282.0,1752.4 3283.0,1750.3 3284.0,1748.2 3284.9,1746.0 3285.9,1743.8 3286.9,1741.6 3287.8,1739.3 3288.8,1737.1 3289.8,1734.8 3290.7,1732.5 3291.7,1730.1 3292.7,1727.8 3293.6,1725.4 3294.6,1723.0 3295.6,1720.6 3296.5,1718.1 3297.5,1715.7 3298.5,1713.2 3299.4,1710.7 3300.4,1708.2 3301.4,1705.7 3302.3,1703.2 3303.3,1700.7 3304.3,1698.1 3305.3,1695.6 3306.2,1693.0 3307.2,1690.4 3308.2,1687.9 3309.1,1685.3 3310.1,1682.7 3311.1,1680.1 3312.0,1677.6 3313.0,1675.0"/>
<g stroke="#bebebe" stroke-width="2.6" fill="none">
<rect x="1763.7" y="139.8" width="1549.3" height="1715.8"/>
<path d="M1743 139.8 H1763.7 M1743 311.4 H1763.7 M1743 483.0 H1763.7 M1743 654.5 H1763.7 M1743 826.1 H1763.7 M1743 997.7 H1763.7 M1743 1169.3 H1763.7 M1743 1340.9 H1763.7 M1743 1512.4 H1763.7 M1743 1684.0 H1763.7 M1743 1855.6 H1763.7 M1763.7 1855.6 V1875.6 M1918.6 1855.6 V1875.6 M2073.6 1855.6 V1875.6 M2228.5 1855.6 V1875.6 M2383.4 1855.6 V1875.6 M2538.3 1855.6 V1875.6 M2693.3 1855.6 V1875.6 M2848.2 1855.6 V1875.6 M3003.1 1855.6 V1875.6 M3158.1 1855.6 V1875.6 M3313.0 1855.6 V1875.6"/>
</g>
<g font-family='"Liberation Mono", monospace' font-size="27" fill="#b6b6b6" stroke="#b6b6b6" stroke-width="0.3">
<text transform="translate(1677.6 152.2) scale(1 1.1)" textLength="65" lengthAdjust="spacingAndGlyphs">51mW</text>
<text transform="translate(1677.6 323.8) scale(1 1.1)" textLength="65" lengthAdjust="spacingAndGlyphs">48mW</text>
<text transform="translate(1677.6 495.4) scale(1 1.1)" textLength="65" lengthAdjust="spacingAndGlyphs">45mW</text>
<text transform="translate(1677.6 666.9) scale(1 1.1)" textLength="65" lengthAdjust="spacingAndGlyphs">42mW</text>
<text transform="translate(1677.6 838.5) scale(1 1.1)" textLength="65" lengthAdjust="spacingAndGlyphs">39mW</text>
<text transform="translate(1677.6 1010.1) scale(1 1.1)" textLength="65" lengthAdjust="spacingAndGlyphs">36mW</text>
<text transform="translate(1677.6 1181.7) scale(1 1.1)" textLength="65" lengthAdjust="spacingAndGlyphs">33mW</text>
<text transform="translate(1677.6 1353.3) scale(1 1.1)" textLength="65" lengthAdjust="spacingAndGlyphs">30mW</text>
<text transform="translate(1677.6 1524.8) scale(1 1.1)" textLength="65" lengthAdjust="spacingAndGlyphs">27mW</text>
<text transform="translate(1677.6 1696.4) scale(1 1.1)" textLength="65" lengthAdjust="spacingAndGlyphs">24mW</text>
<text transform="translate(1677.6 1868.0) scale(1 1.1)" textLength="65" lengthAdjust="spacingAndGlyphs">21mW</text>
<text transform="translate(1723.1 1907.4) scale(1 1.1)" textLength="81.2" lengthAdjust="spacingAndGlyphs">0.0ms</text>
<text transform="translate(1878.0 1907.4) scale(1 1.1)" textLength="81.2" lengthAdjust="spacingAndGlyphs">0.5ms</text>
<text transform="translate(2033.0 1907.4) scale(1 1.1)" textLength="81.2" lengthAdjust="spacingAndGlyphs">1.0ms</text>
<text transform="translate(2187.9 1907.4) scale(1 1.1)" textLength="81.2" lengthAdjust="spacingAndGlyphs">1.5ms</text>
<text transform="translate(2342.8 1907.4) scale(1 1.1)" textLength="81.2" lengthAdjust="spacingAndGlyphs">2.0ms</text>
<text transform="translate(2497.8 1907.4) scale(1 1.1)" textLength="81.2" lengthAdjust="spacingAndGlyphs">2.5ms</text>
<text transform="translate(2652.7 1907.4) scale(1 1.1)" textLength="81.2" lengthAdjust="spacingAndGlyphs">3.0ms</text>
<text transform="translate(2807.6 1907.4) scale(1 1.1)" textLength="81.2" lengthAdjust="spacingAndGlyphs">3.5ms</text>
<text transform="translate(2962.5 1907.4) scale(1 1.1)" textLength="81.2" lengthAdjust="spacingAndGlyphs">4.0ms</text>
<text transform="translate(3117.5 1907.4) scale(1 1.1)" textLength="81.2" lengthAdjust="spacingAndGlyphs">4.5ms</text>
<text transform="translate(3272.4 1907.4) scale(1 1.1)" textLength="81.2" lengthAdjust="spacingAndGlyphs">5.0ms</text>
</g>
<g font-family='"Liberation Mono", monospace' font-size="28" stroke-width="0.5">
<text fill="#2dfb32" stroke="#2dfb32" transform="translate(1821.2 132.1) scale(1 1.06)" textLength="659.1" lengthAdjust="spacingAndGlyphs">V(N002,N004)<tspan dy="4.5">*</tspan><tspan dy="-4.5">I</tspan>d(J2)+V(N003,N004)<tspan dy="4.5">*</tspan><tspan dy="-4.5">I</tspan>g(J2)</text>
<text fill="#0c26fb" stroke="#0c26fb" transform="translate(2594.7 132.1) scale(1 1.06)" textLength="659.1" lengthAdjust="spacingAndGlyphs">V(N004,N008)<tspan dy="4.5">*</tspan><tspan dy="-4.5">I</tspan>d(J1)+V(N007,N008)<tspan dy="4.5">*</tspan><tspan dy="-4.5">I</tspan>g(J1)</text>
</g>
</svg>
<div id="rtitle">
<div class="tl" style="left:16px;background:#dcdcdc;border:1px solid #d0d0d0"></div>
<div class="tl" style="left:56px;background:#dcdcdc;border:1px solid #d0d0d0"></div>
<div class="tl" style="left:96px;background:#dcdcdc;border:1px solid #d0d0d0"></div>
<svg width="32" height="30" viewBox="0 0 32 30" style="position:absolute;left:724px;top:0"><rect x="0" y="0" width="32" height="30" fill="#dedede"/><path d="M1.5 0 V28.5 H32" stroke="#8e8e8e" stroke-width="1.4" fill="none"/><path d="M3 4 L10 0 L16 5 L24 0 L32 4" stroke="#bcbcbc" stroke-width="1.2" fill="none"/><path d="M3 17 q5 -4 9 -1 t10 0 t10 -1" stroke="#c4c4c4" stroke-width="1.2" fill="none"/><path d="M3 24 h8 v-2 h10 v2 h11" stroke="#c4c4c4" stroke-width="1.2" fill="none"/><path d="M0 4h2M0 9h2M0 14h2M0 19h2M0 24h2M6 28v2M11 28v2M16 28v2M21 28v2M26 28v2" stroke="#8e8e8e" stroke-width="1"/></svg>
<svg class="abs" style="left:760px;top:0" width="200" height="36"><text x="5.4" y="24" font-family='"Liberation Sans", sans-serif' font-size="26" fill="#b4b4b4" textLength="184.3" lengthAdjust="spacingAndGlyphs">new_phono.raw</text></svg>
</div>
<div id="rtool">
</div>
<div class="btn" style="left:41.5px;top:47.5px"><svg width="48" height="38" viewBox="0 0 48 38" style="position:absolute;left:14.5px;top:0.5px;filter:blur(0.45px)"><circle cx="20.9" cy="16.7" r="9.2" fill="#c4c4c4" stroke="#1c1c1c" stroke-width="2.5"/>
<path d="M17.5 12 l4 -1.2 M22.5 22 l4.5 -3.6" stroke="#38f2f2" stroke-width="3" stroke-linecap="round"/>
<path d="M30.6 26.6 L39 34.4" stroke="#000" stroke-width="5.2"/>
<path d="M8.6 6.6 L27.4 33.2 M33.4 8.6 L8.6 26.6" stroke="#f5101c" stroke-width="2.3" stroke-linecap="round"/><path d="M8.6 6.6 L14 13 M8.6 26.6 L14 22.6" stroke="#f5101c" stroke-width="4" stroke-linecap="round"/></svg></div>
<div class="btn" style="left:145.5px;top:47.5px"><svg width="48" height="38" viewBox="0 0 48 38" style="position:absolute;left:14.5px;top:0.5px;filter:blur(0.45px)"><path d="M11 3.9 V35 M8 33 H40" fill="none" stroke="#111" stroke-width="2.1"/>
<path d="M8 8.9h3M8 14.9h3M8 20.9h3M8 26.9h3 M17 33v3M23 33v3M29 33v3M35 33v3M11 33v3" stroke="#111" stroke-width="2.1"/>
<path d="M28 4.7 h4 M24.1 6.8 h4 M19.9 8.9 h4 M19.9 24.5 h4 M24.1 26.6 h4 M28 28.7 h4" stroke="#ff3a2a" stroke-width="2.1"/>
<path d="M35 4.5 V29.5" stroke="#111" stroke-width="2.3"/><path d="M30.8 9 L35 4.4 L39.2 9 M30.8 24.8 L35 29.6 L39.2 24.8" fill="none" stroke="#111" stroke-width="2.2"/><path d="M33 6.5 h4 v1.5 h-4z M33 26 h4 v1.5 h-4z" fill="#111"/>
<path d="M19 12 V22" stroke="#111" stroke-width="2.2"/><path d="M19 9.8 L22.4 13.6 H15.6 Z M19 24 L22.4 20.2 H15.6 Z" fill="#111"/></svg></div>
<div class="btn" style="left:249.5px;top:47.5px"><svg width="48" height="38" viewBox="0 0 48 38" style="position:absolute;left:14.5px;top:0.5px;filter:blur(0.45px)"><path d="M11 18.3 V35 M8 33 H28" fill="none" stroke="#111" stroke-width="2.1"/>
<path d="M8 20.9h3M8 26.9h3 M17 33v3M23 33v3M11 33v3" stroke="#111" stroke-width="2.1"/>
<path d="M20.9 8.9 L22.7 6.8 H27.4 L28.4 8.9 H33.4 L34.5 6.8 H37.9 L39.2 8.9" fill="none" stroke="#3242ff" stroke-width="2.1" stroke-linejoin="round" stroke-linecap="round"/>
<path d="M12.3 29 L14.6 26.9 H19.3 L20.9 29 H25.8 L26.9 26.9" fill="none" stroke="#ff3242" stroke-width="2.1" stroke-linejoin="round" stroke-linecap="round"/>
<path d="M26.9 12.8 L21 19" stroke="#555" stroke-width="1.8" stroke-dasharray="2 1.2"/><circle cx="26.9" cy="12.8" r="1.3" fill="#a04040"/>
<path d="M18.8 14.4 V21.3 H25.8" fill="none" stroke="#000" stroke-width="2.2" stroke-linecap="round"/><path d="M18.8 17 L23 21.3 H18.8 Z" fill="#000"/></svg></div>
<div class="btn" style="left:353.5px;top:47.5px"><svg width="48" height="38" viewBox="0 0 48 38" style="position:absolute;left:14.5px;top:0.5px;filter:blur(0.45px)"><defs><linearGradient id="hb" x1="0" x2="1"><stop offset="0" stop-color="#00007c"/><stop offset=".45" stop-color="#0008a0"/><stop offset=".8" stop-color="#0a22ff"/><stop offset="1" stop-color="#0a22ff"/></linearGradient>
<linearGradient id="hg" x1="0" x2="0" y1="0" y2="1"><stop offset="0" stop-color="#ffffff"/><stop offset=".3" stop-color="#c8c8c8"/><stop offset=".75" stop-color="#bcbcbc"/><stop offset="1" stop-color="#6a6a6a"/></linearGradient></defs>
<path d="M8.1 8 Q8.1 6 10 6 H13 Q14.1 6 14.1 7.5 V8.9 H17.5 L19.8 5.5 V3.9 H30 V5.5 H33.5 L39.9 12.5 V20.1 L36 16 L30 15.5 V17.8 H18.3 V15 H14.1 V16.5 Q14.1 17.8 12.5 17.8 H10 Q8.1 17.8 8.1 16 Z" fill="#000"/>
<path d="M9.9 8 H12.6 V10.4 H18.2 L20.4 7.2 V5.6 H29.5 V7 H33 L38.3 12.8 V16 L36.2 14 L29.6 13.5 V16 H19.4 V13.3 H12.6 V16.3 H9.9 Z" fill="url(#hg)"/>
<rect x="21.9" y="17.8" width="6.3" height="8.4" fill="url(#hb)"/><rect x="19.8" y="26.1" width="10.2" height="7.8" fill="url(#hb)"/></svg></div>
<svg class="abs" style="left:440px;top:36px" width="660" height="64"><text x="9.4" y="41.2" font-family='"Liberation Sans", sans-serif' font-size="26" fill="#222" stroke="#222" stroke-width="0.4" textLength="616.5" lengthAdjust="spacingAndGlyphs">Right-Click to manually enter Horizontal Axis Limits</text></svg>
<div id="rshadow"></div>
</div>
</body></html>
